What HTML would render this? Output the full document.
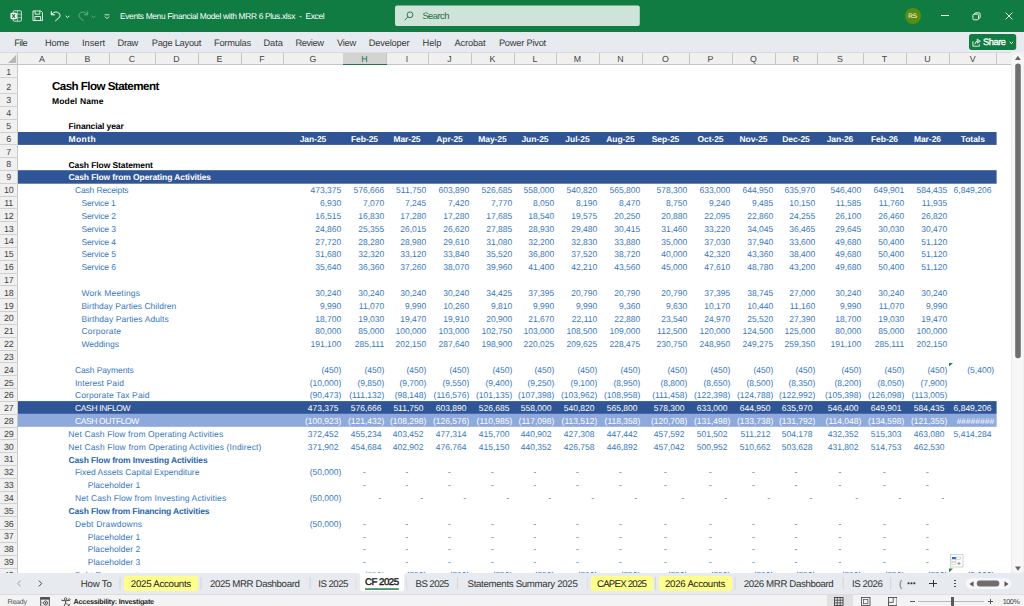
<!DOCTYPE html>
<html><head><meta charset="utf-8"><title>Excel</title>
<style>
html,body{margin:0;padding:0;}
body{width:1024px;height:606px;overflow:hidden;background:#fff;position:relative;font-family:"Liberation Sans",sans-serif;text-rendering:geometricPrecision;}
.r{position:absolute;display:block;}
.t{position:absolute;white-space:pre;margin:0;padding:0;}
</style></head><body>
<div class="r" style="left:0px;top:0px;width:1024px;height:32px;background:#107C41;"></div>
<svg class="r" style="left:10px;top:10px" width="12" height="12" viewBox="0 0 12 12"><rect x="3.2" y="0.8" width="8.2" height="10.4" rx="1" fill="none" stroke="#fff" stroke-width="0.9" opacity=".85"/><path d="M3.2 4.2H11.4M3.2 7.7H11.4M7.6 0.8V11.2" stroke="#fff" stroke-width="0.7" opacity=".7"/><rect x="0.5" y="2.7" width="6.3" height="6.6" rx="0.7" fill="#fff"/><path d="M2.2 4.2L5.1 7.8M5.1 4.2L2.2 7.8" stroke="#107C41" stroke-width="1.1"/></svg>
<svg class="r" style="left:31.5px;top:10.2px" width="11.5" height="11.5" viewBox="0 0 12 12"><path d="M1 1H9.3L11 2.7V11H1Z" fill="none" stroke="#fff" stroke-width="0.9"/><path d="M3.2 1V4.3H8.2V1M3 11V6.8H9V11" fill="none" stroke="#fff" stroke-width="0.9"/></svg>
<svg class="r" style="left:49.8px;top:9.6px" width="12" height="12" viewBox="0 0 12 12"><path d="M1.3 1.2V4.8H5M1.6 4.5C3.2 2.2 6.3 1.2 8.6 2.9C10.6 4.4 10.4 6.6 8.8 8L5.2 11" fill="none" stroke="#fff" stroke-width="1"/></svg>
<svg class="r" style="left:65px;top:14.5px" width="5" height="4" viewBox="0 0 5 4"><path d="M0.6 0.8L2.5 2.7L4.4 0.8" fill="none" stroke="#fff" stroke-width="0.9"/></svg>
<svg class="r" style="left:76.5px;top:10px;opacity:.38" width="12" height="12" viewBox="0 0 12 12"><path d="M10.7 1.2V4.8H7M10.4 4.5C8.8 2.2 5.7 1.2 3.4 2.9C1.4 4.4 1.6 6.6 3.2 8L6.8 11" fill="none" stroke="#fff" stroke-width="1"/></svg>
<svg class="r" style="left:90.5px;top:14.5px;opacity:.38" width="5" height="4" viewBox="0 0 5 4"><path d="M0.6 0.8L2.5 2.7L4.4 0.8" fill="none" stroke="#fff" stroke-width="0.9"/></svg>
<svg class="r" style="left:104px;top:13.5px" width="6" height="6" viewBox="0 0 6 6"><path d="M0.6 0.8H5.4" stroke="#fff" stroke-width="0.8"/><path d="M1 2.6L3 4.6L5 2.6" fill="none" stroke="#fff" stroke-width="0.9"/></svg>
<div class="t" style="left:120.00px;top:11px;font-size:8.4px;line-height:10px;height:10px;color:#fff;letter-spacing:-0.329px;">Events Menu Financial Model with MRR 6 Plus.xlsx  -  Excel</div>
<svg class="r" style="left:395px;top:5px" width="245" height="22"><rect x="0.00" y="0.50" width="244.80" height="20.60" fill="#CFE4D8" rx="2"/></svg>
<svg class="r" style="left:403.5px;top:11px" width="10" height="10" viewBox="0 0 10 10"><circle cx="6" cy="3.8" r="2.9" fill="none" stroke="#1e6b41" stroke-width="0.9"/><path d="M3.9 5.9L0.7 9.2" stroke="#1e6b41" stroke-width="0.9"/></svg>
<div class="t" style="left:422.40px;top:10px;font-size:9.4px;line-height:11px;height:11px;color:#1e6b41;letter-spacing:-0.531px;">Search</div>
<div class="r" style="left:904.6px;top:7.7px;width:16px;height:16px;background:#5B8C12;border-radius:50%;"></div>
<div class="t" style="left:908.29px;top:13px;font-size:6.5px;line-height:7px;height:7px;color:#fff;letter-spacing:-0.200px;">RS</div>
<div class="r" style="left:941px;top:15.2px;width:7.5px;height:0.9px;background:#fff;"></div>
<svg class="r" style="left:972px;top:12px" width="9" height="9" viewBox="0 0 9 9"><rect x="0.9" y="2.2" width="5.6" height="5.6" rx="1.2" fill="none" stroke="#fff" stroke-width="0.9"/><path d="M2.6 2.2V1.8Q2.6 0.8 3.6 0.8H7Q8.1 0.8 8.1 1.9V5.3Q8.1 6.3 7.1 6.3H6.6" fill="none" stroke="#fff" stroke-width="0.9"/></svg>
<svg class="r" style="left:1004.5px;top:12px" width="8" height="8" viewBox="0 0 8 8"><path d="M0.6 0.6L7.4 7.4M7.4 0.6L0.6 7.4" stroke="#fff" stroke-width="0.95"/></svg>
<div class="r" style="left:0px;top:32px;width:1024px;height:20px;background:#E7EAEE;"></div>
<div class="t" style="left:14.20px;top:38px;font-size:9.3px;line-height:10px;height:10px;color:#3b3b3b;letter-spacing:-0.471px;">File</div>
<div class="t" style="left:45.10px;top:38px;font-size:9.3px;line-height:10px;height:10px;color:#3b3b3b;letter-spacing:-0.252px;">Home</div>
<div class="t" style="left:82.00px;top:38px;font-size:9.3px;line-height:10px;height:10px;color:#3b3b3b;letter-spacing:-0.043px;">Insert</div>
<div class="t" style="left:117.60px;top:38px;font-size:9.3px;line-height:10px;height:10px;color:#3b3b3b;letter-spacing:-0.325px;">Draw</div>
<div class="t" style="left:151.80px;top:38px;font-size:9.3px;line-height:10px;height:10px;color:#3b3b3b;letter-spacing:-0.275px;">Page Layout</div>
<div class="t" style="left:214.00px;top:38px;font-size:9.3px;line-height:10px;height:10px;color:#3b3b3b;letter-spacing:-0.245px;">Formulas</div>
<div class="t" style="left:263.50px;top:38px;font-size:9.3px;line-height:10px;height:10px;color:#3b3b3b;letter-spacing:-0.111px;">Data</div>
<div class="t" style="left:295.40px;top:38px;font-size:9.3px;line-height:10px;height:10px;color:#3b3b3b;letter-spacing:-0.382px;">Review</div>
<div class="t" style="left:336.90px;top:38px;font-size:9.3px;line-height:10px;height:10px;color:#3b3b3b;letter-spacing:-0.222px;">View</div>
<div class="t" style="left:368.70px;top:38px;font-size:9.3px;line-height:10px;height:10px;color:#3b3b3b;letter-spacing:-0.177px;">Developer</div>
<div class="t" style="left:422.60px;top:38px;font-size:9.3px;line-height:10px;height:10px;color:#3b3b3b;letter-spacing:-0.107px;">Help</div>
<div class="t" style="left:454.40px;top:38px;font-size:9.3px;line-height:10px;height:10px;color:#3b3b3b;letter-spacing:-0.136px;">Acrobat</div>
<div class="t" style="left:498.90px;top:38px;font-size:9.3px;line-height:10px;height:10px;color:#3b3b3b;letter-spacing:-0.229px;">Power Pivot</div>
<svg class="r" style="left:969px;top:34px" width="48" height="16"><rect x="0.00" y="0.10" width="47.20" height="15.80" fill="#107C41" rx="2.6"/></svg>
<svg class="r" style="left:971.5px;top:37.5px" width="9.5" height="9" viewBox="0 0 9.5 9"><path d="M0.9 3.2V8.2H7.3V6.2" fill="none" stroke="#fff" stroke-width="0.85"/><path d="M2.9 6.4Q3 3.5 5.4 3.2" fill="none" stroke="#fff" stroke-width="0.85"/><path d="M5.2 1L8.5 3.2L5.2 5.3Z" fill="#fff" fill-opacity=".45" stroke="#fff" stroke-width="0.7"/></svg>
<div class="t" style="left:983.00px;top:37px;font-size:9.3px;line-height:10px;height:10px;color:#fff;letter-spacing:-0.463px;-webkit-text-stroke:0.3px #fff;">Share</div>
<svg class="r" style="left:1009.4px;top:40.6px" width="5" height="4" viewBox="0 0 5 4"><path d="M0.7 0.9L2.45 2.6L4.2 0.9" fill="none" stroke="#fff" stroke-width="1"/></svg>
<div class="r" style="left:0px;top:52px;width:1024px;height:12.2px;background:#F0F0F0;"></div>
<div class="r" style="left:0px;top:52px;width:1011px;height:0.6px;background:#DADADA;"></div>
<div class="r" style="left:0px;top:64px;width:1011px;height:0.8px;background:#C4C4C4;"></div>
<svg class="r" style="left:7px;top:54px" width="10" height="10" viewBox="0 0 10 10"><path d="M9.2 0.8V9H1Z" fill="#B7B7B7"/></svg>
<div class="r" style="left:17.3px;top:52px;width:0.8px;height:13px;background:#C9C9C9;"></div>
<div class="r" style="left:65.6px;top:53px;width:0.8px;height:11px;background:#C6C6C6;"></div>
<div class="t" style="left:39.07px;top:54px;font-size:8.8px;line-height:10px;height:10px;color:#444;letter-spacing:0.000px;">A</div>
<div class="r" style="left:108.6px;top:53px;width:0.8px;height:11px;background:#C6C6C6;"></div>
<div class="t" style="left:84.57px;top:54px;font-size:8.8px;line-height:10px;height:10px;color:#444;letter-spacing:0.000px;">B</div>
<div class="r" style="left:154.6px;top:53px;width:0.8px;height:11px;background:#C6C6C6;"></div>
<div class="t" style="left:128.82px;top:54px;font-size:8.8px;line-height:10px;height:10px;color:#444;letter-spacing:0.000px;">C</div>
<div class="r" style="left:197.6px;top:53px;width:0.8px;height:11px;background:#C6C6C6;"></div>
<div class="t" style="left:173.32px;top:54px;font-size:8.8px;line-height:10px;height:10px;color:#444;letter-spacing:0.000px;">D</div>
<div class="r" style="left:240.6px;top:53px;width:0.8px;height:11px;background:#C6C6C6;"></div>
<div class="t" style="left:216.57px;top:54px;font-size:8.8px;line-height:10px;height:10px;color:#444;letter-spacing:0.000px;">E</div>
<div class="r" style="left:282.6px;top:53px;width:0.8px;height:11px;background:#C6C6C6;"></div>
<div class="t" style="left:259.31px;top:54px;font-size:8.8px;line-height:10px;height:10px;color:#444;letter-spacing:0.000px;">F</div>
<div class="r" style="left:342.6px;top:53px;width:0.8px;height:11px;background:#C6C6C6;"></div>
<div class="t" style="left:309.58px;top:54px;font-size:8.8px;line-height:10px;height:10px;color:#444;letter-spacing:0.000px;">G</div>
<div class="r" style="left:343px;top:52.5px;width:43px;height:11.5px;background:#D3D3D3;"></div>
<div class="r" style="left:343px;top:63.7px;width:43.5px;height:1.3px;background:#217346;"></div>
<div class="r" style="left:385.6px;top:53px;width:0.8px;height:11px;background:#C6C6C6;"></div>
<div class="t" style="left:361.32px;top:54px;font-size:8.8px;line-height:10px;height:10px;color:#217346;letter-spacing:0.000px;">H</div>
<div class="r" style="left:427.6px;top:53px;width:0.8px;height:11px;background:#C6C6C6;"></div>
<div class="t" style="left:405.78px;top:54px;font-size:8.8px;line-height:10px;height:10px;color:#444;letter-spacing:0.000px;">I</div>
<div class="r" style="left:470.6px;top:53px;width:0.8px;height:11px;background:#C6C6C6;"></div>
<div class="t" style="left:447.30px;top:54px;font-size:8.8px;line-height:10px;height:10px;color:#444;letter-spacing:0.000px;">J</div>
<div class="r" style="left:513.6px;top:53px;width:0.8px;height:11px;background:#C6C6C6;"></div>
<div class="t" style="left:489.57px;top:54px;font-size:8.8px;line-height:10px;height:10px;color:#444;letter-spacing:0.000px;">K</div>
<div class="r" style="left:555.6px;top:53px;width:0.8px;height:11px;background:#C6C6C6;"></div>
<div class="t" style="left:532.55px;top:54px;font-size:8.8px;line-height:10px;height:10px;color:#444;letter-spacing:0.000px;">L</div>
<div class="r" style="left:598.6px;top:53px;width:0.8px;height:11px;background:#C6C6C6;"></div>
<div class="t" style="left:573.83px;top:54px;font-size:8.8px;line-height:10px;height:10px;color:#444;letter-spacing:0.000px;">M</div>
<div class="r" style="left:641.6px;top:53px;width:0.8px;height:11px;background:#C6C6C6;"></div>
<div class="t" style="left:617.32px;top:54px;font-size:8.8px;line-height:10px;height:10px;color:#444;letter-spacing:0.000px;">N</div>
<div class="r" style="left:688.6px;top:53px;width:0.8px;height:11px;background:#C6C6C6;"></div>
<div class="t" style="left:662.08px;top:54px;font-size:8.8px;line-height:10px;height:10px;color:#444;letter-spacing:0.000px;">O</div>
<div class="r" style="left:731.6px;top:53px;width:0.8px;height:11px;background:#C6C6C6;"></div>
<div class="t" style="left:707.57px;top:54px;font-size:8.8px;line-height:10px;height:10px;color:#444;letter-spacing:0.000px;">P</div>
<div class="r" style="left:774.6px;top:53px;width:0.8px;height:11px;background:#C6C6C6;"></div>
<div class="t" style="left:750.08px;top:54px;font-size:8.8px;line-height:10px;height:10px;color:#444;letter-spacing:0.000px;">Q</div>
<div class="r" style="left:816.6px;top:53px;width:0.8px;height:11px;background:#C6C6C6;"></div>
<div class="t" style="left:792.82px;top:54px;font-size:8.8px;line-height:10px;height:10px;color:#444;letter-spacing:0.000px;">R</div>
<div class="r" style="left:862.6px;top:53px;width:0.8px;height:11px;background:#C6C6C6;"></div>
<div class="t" style="left:837.07px;top:54px;font-size:8.8px;line-height:10px;height:10px;color:#444;letter-spacing:0.000px;">S</div>
<div class="r" style="left:905.6px;top:53px;width:0.8px;height:11px;background:#C6C6C6;"></div>
<div class="t" style="left:881.81px;top:54px;font-size:8.8px;line-height:10px;height:10px;color:#444;letter-spacing:0.000px;">T</div>
<div class="r" style="left:948.6px;top:53px;width:0.8px;height:11px;background:#C6C6C6;"></div>
<div class="t" style="left:924.32px;top:54px;font-size:8.8px;line-height:10px;height:10px;color:#444;letter-spacing:0.000px;">U</div>
<div class="r" style="left:996.2px;top:53px;width:0.8px;height:11px;background:#C6C6C6;"></div>
<div class="t" style="left:969.87px;top:54px;font-size:8.8px;line-height:10px;height:10px;color:#444;letter-spacing:0.000px;">V</div>
<div class="r" style="left:1010.6px;top:53px;width:0.8px;height:11px;background:#C6C6C6;"></div>
<div class="r" style="left:0px;top:64.8px;width:17.6px;height:508.5px;background:#F0F0F0;"></div>
<div class="r" style="left:17.2px;top:64.8px;width:0.8px;height:508.5px;background:#C9C9C9;"></div>
<div class="r" style="left:0px;top:76.89999999999999px;width:17.5px;height:0.8px;background:#D0D0D0;"></div>
<div class="t" style="left:6.33px;top:67px;font-size:8.9px;line-height:10px;height:10px;color:#444;letter-spacing:-0.250px;">1</div>
<div class="r" style="left:0px;top:93.05px;width:17.5px;height:0.8px;background:#D0D0D0;"></div>
<div class="t" style="left:6.33px;top:82px;font-size:8.9px;line-height:10px;height:10px;color:#444;letter-spacing:-0.250px;">2</div>
<div class="r" style="left:0px;top:105.875px;width:17.5px;height:0.8px;background:#D0D0D0;"></div>
<div class="t" style="left:6.33px;top:95px;font-size:8.9px;line-height:10px;height:10px;color:#444;letter-spacing:-0.250px;">3</div>
<div class="r" style="left:0px;top:118.69999999999999px;width:17.5px;height:0.8px;background:#D0D0D0;"></div>
<div class="t" style="left:6.33px;top:108px;font-size:8.9px;line-height:10px;height:10px;color:#444;letter-spacing:-0.250px;">4</div>
<div class="r" style="left:0px;top:131.525px;width:17.5px;height:0.8px;background:#D0D0D0;"></div>
<div class="t" style="left:6.33px;top:121px;font-size:8.9px;line-height:10px;height:10px;color:#444;letter-spacing:-0.250px;">5</div>
<div class="r" style="left:0px;top:144.35px;width:17.5px;height:0.8px;background:#D0D0D0;"></div>
<div class="t" style="left:6.33px;top:134px;font-size:8.9px;line-height:10px;height:10px;color:#444;letter-spacing:-0.250px;">6</div>
<div class="r" style="left:0px;top:157.17499999999998px;width:17.5px;height:0.8px;background:#D0D0D0;"></div>
<div class="t" style="left:6.33px;top:147px;font-size:8.9px;line-height:10px;height:10px;color:#444;letter-spacing:-0.250px;">7</div>
<div class="r" style="left:0px;top:169.99999999999997px;width:17.5px;height:0.8px;background:#D0D0D0;"></div>
<div class="t" style="left:6.33px;top:159px;font-size:8.9px;line-height:10px;height:10px;color:#444;letter-spacing:-0.250px;">8</div>
<div class="r" style="left:0px;top:182.825px;width:17.5px;height:0.8px;background:#D0D0D0;"></div>
<div class="t" style="left:6.33px;top:172px;font-size:8.9px;line-height:10px;height:10px;color:#444;letter-spacing:-0.250px;">9</div>
<div class="r" style="left:0px;top:195.65px;width:17.5px;height:0.8px;background:#D0D0D0;"></div>
<div class="t" style="left:3.98px;top:185px;font-size:8.9px;line-height:10px;height:10px;color:#444;letter-spacing:-0.250px;">10</div>
<div class="r" style="left:0px;top:208.475px;width:17.5px;height:0.8px;background:#D0D0D0;"></div>
<div class="t" style="left:4.31px;top:198px;font-size:8.9px;line-height:10px;height:10px;color:#444;letter-spacing:-0.250px;">11</div>
<div class="r" style="left:0px;top:221.29999999999998px;width:17.5px;height:0.8px;background:#D0D0D0;"></div>
<div class="t" style="left:3.98px;top:211px;font-size:8.9px;line-height:10px;height:10px;color:#444;letter-spacing:-0.250px;">12</div>
<div class="r" style="left:0px;top:234.12499999999997px;width:17.5px;height:0.8px;background:#D0D0D0;"></div>
<div class="t" style="left:3.98px;top:224px;font-size:8.9px;line-height:10px;height:10px;color:#444;letter-spacing:-0.250px;">13</div>
<div class="r" style="left:0px;top:246.94999999999996px;width:17.5px;height:0.8px;background:#D0D0D0;"></div>
<div class="t" style="left:3.98px;top:236px;font-size:8.9px;line-height:10px;height:10px;color:#444;letter-spacing:-0.250px;">14</div>
<div class="r" style="left:0px;top:259.77500000000003px;width:17.5px;height:0.8px;background:#D0D0D0;"></div>
<div class="t" style="left:3.98px;top:249px;font-size:8.9px;line-height:10px;height:10px;color:#444;letter-spacing:-0.250px;">15</div>
<div class="r" style="left:0px;top:272.6px;width:17.5px;height:0.8px;background:#D0D0D0;"></div>
<div class="t" style="left:3.98px;top:262px;font-size:8.9px;line-height:10px;height:10px;color:#444;letter-spacing:-0.250px;">16</div>
<div class="r" style="left:0px;top:285.425px;width:17.5px;height:0.8px;background:#D0D0D0;"></div>
<div class="t" style="left:3.98px;top:275px;font-size:8.9px;line-height:10px;height:10px;color:#444;letter-spacing:-0.250px;">17</div>
<div class="r" style="left:0px;top:298.25px;width:17.5px;height:0.8px;background:#D0D0D0;"></div>
<div class="t" style="left:3.98px;top:288px;font-size:8.9px;line-height:10px;height:10px;color:#444;letter-spacing:-0.250px;">18</div>
<div class="r" style="left:0px;top:311.075px;width:17.5px;height:0.8px;background:#D0D0D0;"></div>
<div class="t" style="left:3.98px;top:301px;font-size:8.9px;line-height:10px;height:10px;color:#444;letter-spacing:-0.250px;">19</div>
<div class="r" style="left:0px;top:323.90000000000003px;width:17.5px;height:0.8px;background:#D0D0D0;"></div>
<div class="t" style="left:3.98px;top:313px;font-size:8.9px;line-height:10px;height:10px;color:#444;letter-spacing:-0.250px;">20</div>
<div class="r" style="left:0px;top:336.725px;width:17.5px;height:0.8px;background:#D0D0D0;"></div>
<div class="t" style="left:3.98px;top:326px;font-size:8.9px;line-height:10px;height:10px;color:#444;letter-spacing:-0.250px;">21</div>
<div class="r" style="left:0px;top:349.55px;width:17.5px;height:0.8px;background:#D0D0D0;"></div>
<div class="t" style="left:3.98px;top:339px;font-size:8.9px;line-height:10px;height:10px;color:#444;letter-spacing:-0.250px;">22</div>
<div class="r" style="left:0px;top:362.375px;width:17.5px;height:0.8px;background:#D0D0D0;"></div>
<div class="t" style="left:3.98px;top:352px;font-size:8.9px;line-height:10px;height:10px;color:#444;letter-spacing:-0.250px;">23</div>
<div class="r" style="left:0px;top:375.2px;width:17.5px;height:0.8px;background:#D0D0D0;"></div>
<div class="t" style="left:3.98px;top:365px;font-size:8.9px;line-height:10px;height:10px;color:#444;letter-spacing:-0.250px;">24</div>
<div class="r" style="left:0px;top:388.025px;width:17.5px;height:0.8px;background:#D0D0D0;"></div>
<div class="t" style="left:3.98px;top:378px;font-size:8.9px;line-height:10px;height:10px;color:#444;letter-spacing:-0.250px;">25</div>
<div class="r" style="left:0px;top:400.84999999999997px;width:17.5px;height:0.8px;background:#D0D0D0;"></div>
<div class="t" style="left:3.98px;top:390px;font-size:8.9px;line-height:10px;height:10px;color:#444;letter-spacing:-0.250px;">26</div>
<div class="r" style="left:0px;top:413.675px;width:17.5px;height:0.8px;background:#D0D0D0;"></div>
<div class="t" style="left:3.98px;top:403px;font-size:8.9px;line-height:10px;height:10px;color:#444;letter-spacing:-0.250px;">27</div>
<div class="r" style="left:0px;top:426.5px;width:17.5px;height:0.8px;background:#D0D0D0;"></div>
<div class="t" style="left:3.98px;top:416px;font-size:8.9px;line-height:10px;height:10px;color:#444;letter-spacing:-0.250px;">28</div>
<div class="r" style="left:0px;top:439.325px;width:17.5px;height:0.8px;background:#D0D0D0;"></div>
<div class="t" style="left:3.98px;top:429px;font-size:8.9px;line-height:10px;height:10px;color:#444;letter-spacing:-0.250px;">29</div>
<div class="r" style="left:0px;top:452.15px;width:17.5px;height:0.8px;background:#D0D0D0;"></div>
<div class="t" style="left:3.98px;top:442px;font-size:8.9px;line-height:10px;height:10px;color:#444;letter-spacing:-0.250px;">30</div>
<div class="r" style="left:0px;top:464.97499999999997px;width:17.5px;height:0.8px;background:#D0D0D0;"></div>
<div class="t" style="left:3.98px;top:454px;font-size:8.9px;line-height:10px;height:10px;color:#444;letter-spacing:-0.250px;">31</div>
<div class="r" style="left:0px;top:477.8px;width:17.5px;height:0.8px;background:#D0D0D0;"></div>
<div class="t" style="left:3.98px;top:467px;font-size:8.9px;line-height:10px;height:10px;color:#444;letter-spacing:-0.250px;">32</div>
<div class="r" style="left:0px;top:490.625px;width:17.5px;height:0.8px;background:#D0D0D0;"></div>
<div class="t" style="left:3.98px;top:480px;font-size:8.9px;line-height:10px;height:10px;color:#444;letter-spacing:-0.250px;">33</div>
<div class="r" style="left:0px;top:503.45px;width:17.5px;height:0.8px;background:#D0D0D0;"></div>
<div class="t" style="left:3.98px;top:493px;font-size:8.9px;line-height:10px;height:10px;color:#444;letter-spacing:-0.250px;">34</div>
<div class="r" style="left:0px;top:516.275px;width:17.5px;height:0.8px;background:#D0D0D0;"></div>
<div class="t" style="left:3.98px;top:506px;font-size:8.9px;line-height:10px;height:10px;color:#444;letter-spacing:-0.250px;">35</div>
<div class="r" style="left:0px;top:529.1px;width:17.5px;height:0.8px;background:#D0D0D0;"></div>
<div class="t" style="left:3.98px;top:519px;font-size:8.9px;line-height:10px;height:10px;color:#444;letter-spacing:-0.250px;">36</div>
<div class="r" style="left:0px;top:541.9250000000001px;width:17.5px;height:0.8px;background:#D0D0D0;"></div>
<div class="t" style="left:3.98px;top:531px;font-size:8.9px;line-height:10px;height:10px;color:#444;letter-spacing:-0.250px;">37</div>
<div class="r" style="left:0px;top:554.75px;width:17.5px;height:0.8px;background:#D0D0D0;"></div>
<div class="t" style="left:3.98px;top:544px;font-size:8.9px;line-height:10px;height:10px;color:#444;letter-spacing:-0.250px;">38</div>
<div class="r" style="left:0px;top:567.575px;width:17.5px;height:0.8px;background:#D0D0D0;"></div>
<div class="t" style="left:3.98px;top:557px;font-size:8.9px;line-height:10px;height:10px;color:#444;letter-spacing:-0.250px;">39</div>
<div class="r" style="left:0px;top:580.4px;width:17.5px;height:0.8px;background:#D0D0D0;"></div>
<div class="t" style="left:3.98px;top:570px;font-size:8.9px;line-height:10px;height:10px;color:#444;letter-spacing:-0.250px;">40</div>
<svg class="r" style="left:18px;top:132px" width="979" height="13"><rect x="0.00" y="0.00" width="978.60" height="12.90" fill="#2F5597"/></svg>
<svg class="r" style="left:18px;top:170px" width="979" height="14"><rect x="0.00" y="0.20" width="978.60" height="13.50" fill="#2F5597"/></svg>
<svg class="r" style="left:18px;top:413px" width="979" height="14"><rect x="0.00" y="0.80" width="978.60" height="13.00" fill="#8EA9DB"/></svg>
<svg class="r" style="left:18px;top:401px" width="979" height="13"><rect x="0.00" y="0.10" width="978.60" height="12.75" fill="#2F5597"/></svg>
<div class="t" style="left:52.00px;top:81px;font-size:11.6px;line-height:12px;height:12px;color:#000;letter-spacing:-0.553px;font-weight:bold;">Cash Flow Statement</div>
<div class="t" style="left:52.00px;top:96px;font-size:8.5px;line-height:10px;height:10px;color:#000;letter-spacing:0.163px;font-weight:bold;">Model Name</div>
<div class="t" style="left:68.50px;top:121px;font-size:8.5px;line-height:10px;height:10px;color:#000;letter-spacing:-0.114px;font-weight:bold;">Financial year</div>
<div class="t" style="left:68.50px;top:134px;font-size:8.5px;line-height:10px;height:10px;color:#fff;letter-spacing:0.402px;font-weight:bold;">Month</div>
<div class="t" style="left:68.50px;top:160px;font-size:8.5px;line-height:10px;height:10px;color:#000;letter-spacing:-0.087px;font-weight:bold;">Cash Flow Statement</div>
<div class="t" style="left:68.50px;top:172px;font-size:8.5px;line-height:10px;height:10px;color:#fff;letter-spacing:-0.103px;font-weight:bold;">Cash Flow from Operating Activities</div>
<div class="t" style="left:74.90px;top:185px;font-size:8.5px;line-height:10px;height:10px;color:#3778BD;letter-spacing:-0.129px;">Cash Receipts</div>
<div class="t" style="left:81.40px;top:198px;font-size:8.5px;line-height:10px;height:10px;color:#3778BD;letter-spacing:-0.137px;">Service 1</div>
<div class="t" style="left:81.40px;top:211px;font-size:8.5px;line-height:10px;height:10px;color:#3778BD;letter-spacing:-0.115px;">Service 2</div>
<div class="t" style="left:81.40px;top:224px;font-size:8.5px;line-height:10px;height:10px;color:#3778BD;letter-spacing:-0.115px;">Service 3</div>
<div class="t" style="left:81.40px;top:237px;font-size:8.5px;line-height:10px;height:10px;color:#3778BD;letter-spacing:-0.115px;">Service 4</div>
<div class="t" style="left:81.40px;top:249px;font-size:8.5px;line-height:10px;height:10px;color:#3778BD;letter-spacing:-0.115px;">Service 5</div>
<div class="t" style="left:81.40px;top:262px;font-size:8.5px;line-height:10px;height:10px;color:#3778BD;letter-spacing:-0.115px;">Service 6</div>
<div class="t" style="left:81.40px;top:288px;font-size:8.5px;line-height:10px;height:10px;color:#3778BD;letter-spacing:0.175px;">Work Meetings</div>
<div class="t" style="left:81.40px;top:301px;font-size:8.5px;line-height:10px;height:10px;color:#3778BD;letter-spacing:0.039px;">Birthday Parties Children</div>
<div class="t" style="left:81.40px;top:314px;font-size:8.5px;line-height:10px;height:10px;color:#3778BD;letter-spacing:0.082px;">Birthday Parties Adults</div>
<div class="t" style="left:81.40px;top:326px;font-size:8.5px;line-height:10px;height:10px;color:#3778BD;letter-spacing:0.234px;">Corporate</div>
<div class="t" style="left:81.40px;top:339px;font-size:8.5px;line-height:10px;height:10px;color:#3778BD;letter-spacing:-0.018px;">Weddings</div>
<div class="t" style="left:74.90px;top:365px;font-size:8.5px;line-height:10px;height:10px;color:#3778BD;letter-spacing:-0.092px;">Cash Payments</div>
<div class="t" style="left:74.90px;top:378px;font-size:8.5px;line-height:10px;height:10px;color:#3778BD;letter-spacing:0.106px;">Interest Paid</div>
<div class="t" style="left:74.90px;top:390px;font-size:8.5px;line-height:10px;height:10px;color:#3778BD;letter-spacing:0.116px;">Corporate Tax Paid</div>
<div class="t" style="left:74.90px;top:403px;font-size:8.5px;line-height:10px;height:10px;color:#fff;letter-spacing:-0.330px;">CASH INFLOW</div>
<div class="t" style="left:74.90px;top:416px;font-size:8.5px;line-height:10px;height:10px;color:#fff;letter-spacing:-0.364px;">CASH OUTFLOW</div>
<div class="t" style="left:68.30px;top:429px;font-size:8.5px;line-height:10px;height:10px;color:#3778BD;letter-spacing:0.123px;">Net Cash Flow from Operating Activities</div>
<div class="t" style="left:68.30px;top:442px;font-size:8.5px;line-height:10px;height:10px;color:#3778BD;letter-spacing:0.142px;">Net Cash Flow from Operating Activities (Indirect)</div>
<div class="t" style="left:74.90px;top:467px;font-size:8.5px;line-height:10px;height:10px;color:#3778BD;letter-spacing:-0.007px;">Fixed Assets Capital Expenditure</div>
<div class="t" style="left:87.70px;top:480px;font-size:8.5px;line-height:10px;height:10px;color:#3778BD;letter-spacing:0.040px;">Placeholder 1</div>
<div class="t" style="left:74.90px;top:493px;font-size:8.5px;line-height:10px;height:10px;color:#3778BD;letter-spacing:0.115px;">Net Cash Flow from Investing Activities</div>
<div class="t" style="left:74.90px;top:519px;font-size:8.5px;line-height:10px;height:10px;color:#3778BD;letter-spacing:0.191px;">Debt Drawdowns</div>
<div class="t" style="left:87.70px;top:532px;font-size:8.5px;line-height:10px;height:10px;color:#3778BD;letter-spacing:0.040px;">Placeholder 1</div>
<div class="t" style="left:87.70px;top:544px;font-size:8.5px;line-height:10px;height:10px;color:#3778BD;letter-spacing:0.055px;">Placeholder 2</div>
<div class="t" style="left:87.70px;top:557px;font-size:8.5px;line-height:10px;height:10px;color:#3778BD;letter-spacing:0.055px;">Placeholder 3</div>
<div class="t" style="left:74.90px;top:570px;font-size:8.5px;line-height:10px;height:10px;color:#3778BD;letter-spacing:0.001px;">Debt Repayments</div>
<div class="t" style="left:68.50px;top:455px;font-size:8.5px;line-height:10px;height:10px;color:#1F66AE;letter-spacing:-0.122px;font-weight:bold;">Cash Flow from Investing Activities</div>
<div class="t" style="left:68.50px;top:506px;font-size:8.5px;line-height:10px;height:10px;color:#1F66AE;letter-spacing:-0.151px;font-weight:bold;">Cash Flow from Financing Activities</div>
<div class="t" style="left:299.66px;top:134px;font-size:8.5px;line-height:10px;height:10px;color:#fff;letter-spacing:-0.050px;font-weight:bold;">Jan-25</div>
<div class="t" style="left:350.93px;top:134px;font-size:8.5px;line-height:10px;height:10px;color:#fff;letter-spacing:-0.050px;font-weight:bold;">Feb-25</div>
<div class="t" style="left:393.42px;top:134px;font-size:8.5px;line-height:10px;height:10px;color:#fff;letter-spacing:-0.050px;font-weight:bold;">Mar-25</div>
<div class="t" style="left:436.16px;top:134px;font-size:8.5px;line-height:10px;height:10px;color:#fff;letter-spacing:-0.050px;font-weight:bold;">Apr-25</div>
<div class="t" style="left:478.21px;top:134px;font-size:8.5px;line-height:10px;height:10px;color:#fff;letter-spacing:-0.050px;font-weight:bold;">May-25</div>
<div class="t" style="left:521.43px;top:134px;font-size:8.5px;line-height:10px;height:10px;color:#fff;letter-spacing:-0.050px;font-weight:bold;">Jun-25</div>
<div class="t" style="left:565.34px;top:134px;font-size:8.5px;line-height:10px;height:10px;color:#fff;letter-spacing:-0.050px;font-weight:bold;">Jul-25</div>
<div class="t" style="left:606.22px;top:134px;font-size:8.5px;line-height:10px;height:10px;color:#fff;letter-spacing:-0.050px;font-weight:bold;">Aug-25</div>
<div class="t" style="left:651.69px;top:134px;font-size:8.5px;line-height:10px;height:10px;color:#fff;letter-spacing:-0.050px;font-weight:bold;">Sep-25</div>
<div class="t" style="left:697.40px;top:134px;font-size:8.5px;line-height:10px;height:10px;color:#fff;letter-spacing:-0.050px;font-weight:bold;">Oct-25</div>
<div class="t" style="left:739.45px;top:134px;font-size:8.5px;line-height:10px;height:10px;color:#fff;letter-spacing:-0.050px;font-weight:bold;">Nov-25</div>
<div class="t" style="left:782.19px;top:134px;font-size:8.5px;line-height:10px;height:10px;color:#fff;letter-spacing:-0.050px;font-weight:bold;">Dec-25</div>
<div class="t" style="left:826.66px;top:134px;font-size:8.5px;line-height:10px;height:10px;color:#fff;letter-spacing:-0.050px;font-weight:bold;">Jan-26</div>
<div class="t" style="left:870.93px;top:134px;font-size:8.5px;line-height:10px;height:10px;color:#fff;letter-spacing:-0.050px;font-weight:bold;">Feb-26</div>
<div class="t" style="left:913.92px;top:134px;font-size:8.5px;line-height:10px;height:10px;color:#fff;letter-spacing:-0.050px;font-weight:bold;">Mar-26</div>
<div class="t" style="left:960.72px;top:134px;font-size:8.5px;line-height:10px;height:10px;color:#fff;letter-spacing:-0.050px;font-weight:bold;">Totals</div>
<div class="t" style="right:682.80px;top:185px;font-size:8.5px;line-height:10px;height:10px;color:#3778BD;letter-spacing:-0.000px;">473,375</div>
<div class="t" style="right:639.80px;top:185px;font-size:8.5px;line-height:10px;height:10px;color:#3778BD;letter-spacing:-0.000px;">576,666</div>
<div class="t" style="right:597.80px;top:185px;font-size:8.5px;line-height:10px;height:10px;color:#3778BD;letter-spacing:-0.000px;">511,750</div>
<div class="t" style="right:554.80px;top:185px;font-size:8.5px;line-height:10px;height:10px;color:#3778BD;letter-spacing:-0.000px;">603,890</div>
<div class="t" style="right:511.80px;top:185px;font-size:8.5px;line-height:10px;height:10px;color:#3778BD;letter-spacing:-0.000px;">526,685</div>
<div class="t" style="right:469.80px;top:185px;font-size:8.5px;line-height:10px;height:10px;color:#3778BD;letter-spacing:-0.000px;">558,000</div>
<div class="t" style="right:426.80px;top:185px;font-size:8.5px;line-height:10px;height:10px;color:#3778BD;letter-spacing:-0.000px;">540,820</div>
<div class="t" style="right:383.80px;top:185px;font-size:8.5px;line-height:10px;height:10px;color:#3778BD;letter-spacing:-0.000px;">565,800</div>
<div class="t" style="right:336.80px;top:185px;font-size:8.5px;line-height:10px;height:10px;color:#3778BD;letter-spacing:-0.000px;">578,300</div>
<div class="t" style="right:293.80px;top:185px;font-size:8.5px;line-height:10px;height:10px;color:#3778BD;letter-spacing:-0.000px;">633,000</div>
<div class="t" style="right:250.80px;top:185px;font-size:8.5px;line-height:10px;height:10px;color:#3778BD;letter-spacing:-0.000px;">644,950</div>
<div class="t" style="right:208.80px;top:185px;font-size:8.5px;line-height:10px;height:10px;color:#3778BD;letter-spacing:-0.000px;">635,970</div>
<div class="t" style="right:162.80px;top:185px;font-size:8.5px;line-height:10px;height:10px;color:#3778BD;letter-spacing:-0.000px;">546,400</div>
<div class="t" style="right:119.80px;top:185px;font-size:8.5px;line-height:10px;height:10px;color:#3778BD;letter-spacing:-0.000px;">649,901</div>
<div class="t" style="right:76.80px;top:185px;font-size:8.5px;line-height:10px;height:10px;color:#3778BD;letter-spacing:-0.000px;">584,435</div>
<div class="t" style="right:32.60px;top:185px;font-size:8.5px;line-height:10px;height:10px;color:#3778BD;letter-spacing:-0.000px;">6,849,206</div>
<div class="t" style="right:682.80px;top:198px;font-size:8.5px;line-height:10px;height:10px;color:#3778BD;letter-spacing:-0.000px;">6,930</div>
<div class="t" style="right:639.80px;top:198px;font-size:8.5px;line-height:10px;height:10px;color:#3778BD;letter-spacing:-0.000px;">7,070</div>
<div class="t" style="right:597.80px;top:198px;font-size:8.5px;line-height:10px;height:10px;color:#3778BD;letter-spacing:-0.000px;">7,245</div>
<div class="t" style="right:554.80px;top:198px;font-size:8.5px;line-height:10px;height:10px;color:#3778BD;letter-spacing:-0.000px;">7,420</div>
<div class="t" style="right:511.80px;top:198px;font-size:8.5px;line-height:10px;height:10px;color:#3778BD;letter-spacing:-0.000px;">7,770</div>
<div class="t" style="right:469.80px;top:198px;font-size:8.5px;line-height:10px;height:10px;color:#3778BD;letter-spacing:-0.000px;">8,050</div>
<div class="t" style="right:426.80px;top:198px;font-size:8.5px;line-height:10px;height:10px;color:#3778BD;letter-spacing:-0.000px;">8,190</div>
<div class="t" style="right:383.80px;top:198px;font-size:8.5px;line-height:10px;height:10px;color:#3778BD;letter-spacing:-0.000px;">8,470</div>
<div class="t" style="right:336.80px;top:198px;font-size:8.5px;line-height:10px;height:10px;color:#3778BD;letter-spacing:-0.000px;">8,750</div>
<div class="t" style="right:293.80px;top:198px;font-size:8.5px;line-height:10px;height:10px;color:#3778BD;letter-spacing:-0.000px;">9,240</div>
<div class="t" style="right:250.80px;top:198px;font-size:8.5px;line-height:10px;height:10px;color:#3778BD;letter-spacing:-0.000px;">9,485</div>
<div class="t" style="right:208.80px;top:198px;font-size:8.5px;line-height:10px;height:10px;color:#3778BD;letter-spacing:-0.000px;">10,150</div>
<div class="t" style="right:162.80px;top:198px;font-size:8.5px;line-height:10px;height:10px;color:#3778BD;letter-spacing:-0.000px;">11,585</div>
<div class="t" style="right:119.80px;top:198px;font-size:8.5px;line-height:10px;height:10px;color:#3778BD;letter-spacing:-0.000px;">11,760</div>
<div class="t" style="right:76.80px;top:198px;font-size:8.5px;line-height:10px;height:10px;color:#3778BD;letter-spacing:-0.000px;">11,935</div>
<div class="t" style="right:682.80px;top:211px;font-size:8.5px;line-height:10px;height:10px;color:#3778BD;letter-spacing:-0.000px;">16,515</div>
<div class="t" style="right:639.80px;top:211px;font-size:8.5px;line-height:10px;height:10px;color:#3778BD;letter-spacing:-0.000px;">16,830</div>
<div class="t" style="right:597.80px;top:211px;font-size:8.5px;line-height:10px;height:10px;color:#3778BD;letter-spacing:-0.000px;">17,280</div>
<div class="t" style="right:554.80px;top:211px;font-size:8.5px;line-height:10px;height:10px;color:#3778BD;letter-spacing:-0.000px;">17,280</div>
<div class="t" style="right:511.80px;top:211px;font-size:8.5px;line-height:10px;height:10px;color:#3778BD;letter-spacing:-0.000px;">17,685</div>
<div class="t" style="right:469.80px;top:211px;font-size:8.5px;line-height:10px;height:10px;color:#3778BD;letter-spacing:-0.000px;">18,540</div>
<div class="t" style="right:426.80px;top:211px;font-size:8.5px;line-height:10px;height:10px;color:#3778BD;letter-spacing:-0.000px;">19,575</div>
<div class="t" style="right:383.80px;top:211px;font-size:8.5px;line-height:10px;height:10px;color:#3778BD;letter-spacing:-0.000px;">20,250</div>
<div class="t" style="right:336.80px;top:211px;font-size:8.5px;line-height:10px;height:10px;color:#3778BD;letter-spacing:-0.000px;">20,880</div>
<div class="t" style="right:293.80px;top:211px;font-size:8.5px;line-height:10px;height:10px;color:#3778BD;letter-spacing:-0.000px;">22,095</div>
<div class="t" style="right:250.80px;top:211px;font-size:8.5px;line-height:10px;height:10px;color:#3778BD;letter-spacing:-0.000px;">22,860</div>
<div class="t" style="right:208.80px;top:211px;font-size:8.5px;line-height:10px;height:10px;color:#3778BD;letter-spacing:-0.000px;">24,255</div>
<div class="t" style="right:162.80px;top:211px;font-size:8.5px;line-height:10px;height:10px;color:#3778BD;letter-spacing:-0.000px;">26,100</div>
<div class="t" style="right:119.80px;top:211px;font-size:8.5px;line-height:10px;height:10px;color:#3778BD;letter-spacing:-0.000px;">26,460</div>
<div class="t" style="right:76.80px;top:211px;font-size:8.5px;line-height:10px;height:10px;color:#3778BD;letter-spacing:-0.000px;">26,820</div>
<div class="t" style="right:682.80px;top:224px;font-size:8.5px;line-height:10px;height:10px;color:#3778BD;letter-spacing:-0.000px;">24,860</div>
<div class="t" style="right:639.80px;top:224px;font-size:8.5px;line-height:10px;height:10px;color:#3778BD;letter-spacing:-0.000px;">25,355</div>
<div class="t" style="right:597.80px;top:224px;font-size:8.5px;line-height:10px;height:10px;color:#3778BD;letter-spacing:-0.000px;">26,015</div>
<div class="t" style="right:554.80px;top:224px;font-size:8.5px;line-height:10px;height:10px;color:#3778BD;letter-spacing:-0.000px;">26,620</div>
<div class="t" style="right:511.80px;top:224px;font-size:8.5px;line-height:10px;height:10px;color:#3778BD;letter-spacing:-0.000px;">27,885</div>
<div class="t" style="right:469.80px;top:224px;font-size:8.5px;line-height:10px;height:10px;color:#3778BD;letter-spacing:-0.000px;">28,930</div>
<div class="t" style="right:426.80px;top:224px;font-size:8.5px;line-height:10px;height:10px;color:#3778BD;letter-spacing:-0.000px;">29,480</div>
<div class="t" style="right:383.80px;top:224px;font-size:8.5px;line-height:10px;height:10px;color:#3778BD;letter-spacing:-0.000px;">30,415</div>
<div class="t" style="right:336.80px;top:224px;font-size:8.5px;line-height:10px;height:10px;color:#3778BD;letter-spacing:-0.000px;">31,460</div>
<div class="t" style="right:293.80px;top:224px;font-size:8.5px;line-height:10px;height:10px;color:#3778BD;letter-spacing:-0.000px;">33,220</div>
<div class="t" style="right:250.80px;top:224px;font-size:8.5px;line-height:10px;height:10px;color:#3778BD;letter-spacing:-0.000px;">34,045</div>
<div class="t" style="right:208.80px;top:224px;font-size:8.5px;line-height:10px;height:10px;color:#3778BD;letter-spacing:-0.000px;">36,465</div>
<div class="t" style="right:162.80px;top:224px;font-size:8.5px;line-height:10px;height:10px;color:#3778BD;letter-spacing:-0.000px;">29,645</div>
<div class="t" style="right:119.80px;top:224px;font-size:8.5px;line-height:10px;height:10px;color:#3778BD;letter-spacing:-0.000px;">30,030</div>
<div class="t" style="right:76.80px;top:224px;font-size:8.5px;line-height:10px;height:10px;color:#3778BD;letter-spacing:-0.000px;">30,470</div>
<div class="t" style="right:682.80px;top:237px;font-size:8.5px;line-height:10px;height:10px;color:#3778BD;letter-spacing:-0.000px;">27,720</div>
<div class="t" style="right:639.80px;top:237px;font-size:8.5px;line-height:10px;height:10px;color:#3778BD;letter-spacing:-0.000px;">28,280</div>
<div class="t" style="right:597.80px;top:237px;font-size:8.5px;line-height:10px;height:10px;color:#3778BD;letter-spacing:-0.000px;">28,980</div>
<div class="t" style="right:554.80px;top:237px;font-size:8.5px;line-height:10px;height:10px;color:#3778BD;letter-spacing:-0.000px;">29,610</div>
<div class="t" style="right:511.80px;top:237px;font-size:8.5px;line-height:10px;height:10px;color:#3778BD;letter-spacing:-0.000px;">31,080</div>
<div class="t" style="right:469.80px;top:237px;font-size:8.5px;line-height:10px;height:10px;color:#3778BD;letter-spacing:-0.000px;">32,200</div>
<div class="t" style="right:426.80px;top:237px;font-size:8.5px;line-height:10px;height:10px;color:#3778BD;letter-spacing:-0.000px;">32,830</div>
<div class="t" style="right:383.80px;top:237px;font-size:8.5px;line-height:10px;height:10px;color:#3778BD;letter-spacing:-0.000px;">33,880</div>
<div class="t" style="right:336.80px;top:237px;font-size:8.5px;line-height:10px;height:10px;color:#3778BD;letter-spacing:-0.000px;">35,000</div>
<div class="t" style="right:293.80px;top:237px;font-size:8.5px;line-height:10px;height:10px;color:#3778BD;letter-spacing:-0.000px;">37,030</div>
<div class="t" style="right:250.80px;top:237px;font-size:8.5px;line-height:10px;height:10px;color:#3778BD;letter-spacing:-0.000px;">37,940</div>
<div class="t" style="right:208.80px;top:237px;font-size:8.5px;line-height:10px;height:10px;color:#3778BD;letter-spacing:-0.000px;">33,600</div>
<div class="t" style="right:162.80px;top:237px;font-size:8.5px;line-height:10px;height:10px;color:#3778BD;letter-spacing:-0.000px;">49,680</div>
<div class="t" style="right:119.80px;top:237px;font-size:8.5px;line-height:10px;height:10px;color:#3778BD;letter-spacing:-0.000px;">50,400</div>
<div class="t" style="right:76.80px;top:237px;font-size:8.5px;line-height:10px;height:10px;color:#3778BD;letter-spacing:-0.000px;">51,120</div>
<div class="t" style="right:682.80px;top:249px;font-size:8.5px;line-height:10px;height:10px;color:#3778BD;letter-spacing:-0.000px;">31,680</div>
<div class="t" style="right:639.80px;top:249px;font-size:8.5px;line-height:10px;height:10px;color:#3778BD;letter-spacing:-0.000px;">32,320</div>
<div class="t" style="right:597.80px;top:249px;font-size:8.5px;line-height:10px;height:10px;color:#3778BD;letter-spacing:-0.000px;">33,120</div>
<div class="t" style="right:554.80px;top:249px;font-size:8.5px;line-height:10px;height:10px;color:#3778BD;letter-spacing:-0.000px;">33,840</div>
<div class="t" style="right:511.80px;top:249px;font-size:8.5px;line-height:10px;height:10px;color:#3778BD;letter-spacing:-0.000px;">35,520</div>
<div class="t" style="right:469.80px;top:249px;font-size:8.5px;line-height:10px;height:10px;color:#3778BD;letter-spacing:-0.000px;">36,800</div>
<div class="t" style="right:426.80px;top:249px;font-size:8.5px;line-height:10px;height:10px;color:#3778BD;letter-spacing:-0.000px;">37,520</div>
<div class="t" style="right:383.80px;top:249px;font-size:8.5px;line-height:10px;height:10px;color:#3778BD;letter-spacing:-0.000px;">38,720</div>
<div class="t" style="right:336.80px;top:249px;font-size:8.5px;line-height:10px;height:10px;color:#3778BD;letter-spacing:-0.000px;">40,000</div>
<div class="t" style="right:293.80px;top:249px;font-size:8.5px;line-height:10px;height:10px;color:#3778BD;letter-spacing:-0.000px;">42,320</div>
<div class="t" style="right:250.80px;top:249px;font-size:8.5px;line-height:10px;height:10px;color:#3778BD;letter-spacing:-0.000px;">43,360</div>
<div class="t" style="right:208.80px;top:249px;font-size:8.5px;line-height:10px;height:10px;color:#3778BD;letter-spacing:-0.000px;">38,400</div>
<div class="t" style="right:162.80px;top:249px;font-size:8.5px;line-height:10px;height:10px;color:#3778BD;letter-spacing:-0.000px;">49,680</div>
<div class="t" style="right:119.80px;top:249px;font-size:8.5px;line-height:10px;height:10px;color:#3778BD;letter-spacing:-0.000px;">50,400</div>
<div class="t" style="right:76.80px;top:249px;font-size:8.5px;line-height:10px;height:10px;color:#3778BD;letter-spacing:-0.000px;">51,120</div>
<div class="t" style="right:682.80px;top:262px;font-size:8.5px;line-height:10px;height:10px;color:#3778BD;letter-spacing:-0.000px;">35,640</div>
<div class="t" style="right:639.80px;top:262px;font-size:8.5px;line-height:10px;height:10px;color:#3778BD;letter-spacing:-0.000px;">36,360</div>
<div class="t" style="right:597.80px;top:262px;font-size:8.5px;line-height:10px;height:10px;color:#3778BD;letter-spacing:-0.000px;">37,260</div>
<div class="t" style="right:554.80px;top:262px;font-size:8.5px;line-height:10px;height:10px;color:#3778BD;letter-spacing:-0.000px;">38,070</div>
<div class="t" style="right:511.80px;top:262px;font-size:8.5px;line-height:10px;height:10px;color:#3778BD;letter-spacing:-0.000px;">39,960</div>
<div class="t" style="right:469.80px;top:262px;font-size:8.5px;line-height:10px;height:10px;color:#3778BD;letter-spacing:-0.000px;">41,400</div>
<div class="t" style="right:426.80px;top:262px;font-size:8.5px;line-height:10px;height:10px;color:#3778BD;letter-spacing:-0.000px;">42,210</div>
<div class="t" style="right:383.80px;top:262px;font-size:8.5px;line-height:10px;height:10px;color:#3778BD;letter-spacing:-0.000px;">43,560</div>
<div class="t" style="right:336.80px;top:262px;font-size:8.5px;line-height:10px;height:10px;color:#3778BD;letter-spacing:-0.000px;">45,000</div>
<div class="t" style="right:293.80px;top:262px;font-size:8.5px;line-height:10px;height:10px;color:#3778BD;letter-spacing:-0.000px;">47,610</div>
<div class="t" style="right:250.80px;top:262px;font-size:8.5px;line-height:10px;height:10px;color:#3778BD;letter-spacing:-0.000px;">48,780</div>
<div class="t" style="right:208.80px;top:262px;font-size:8.5px;line-height:10px;height:10px;color:#3778BD;letter-spacing:-0.000px;">43,200</div>
<div class="t" style="right:162.80px;top:262px;font-size:8.5px;line-height:10px;height:10px;color:#3778BD;letter-spacing:-0.000px;">49,680</div>
<div class="t" style="right:119.80px;top:262px;font-size:8.5px;line-height:10px;height:10px;color:#3778BD;letter-spacing:-0.000px;">50,400</div>
<div class="t" style="right:76.80px;top:262px;font-size:8.5px;line-height:10px;height:10px;color:#3778BD;letter-spacing:-0.000px;">51,120</div>
<div class="t" style="right:682.80px;top:288px;font-size:8.5px;line-height:10px;height:10px;color:#3778BD;letter-spacing:-0.000px;">30,240</div>
<div class="t" style="right:639.80px;top:288px;font-size:8.5px;line-height:10px;height:10px;color:#3778BD;letter-spacing:-0.000px;">30,240</div>
<div class="t" style="right:597.80px;top:288px;font-size:8.5px;line-height:10px;height:10px;color:#3778BD;letter-spacing:-0.000px;">30,240</div>
<div class="t" style="right:554.80px;top:288px;font-size:8.5px;line-height:10px;height:10px;color:#3778BD;letter-spacing:-0.000px;">30,240</div>
<div class="t" style="right:511.80px;top:288px;font-size:8.5px;line-height:10px;height:10px;color:#3778BD;letter-spacing:-0.000px;">34,425</div>
<div class="t" style="right:469.80px;top:288px;font-size:8.5px;line-height:10px;height:10px;color:#3778BD;letter-spacing:-0.000px;">37,395</div>
<div class="t" style="right:426.80px;top:288px;font-size:8.5px;line-height:10px;height:10px;color:#3778BD;letter-spacing:-0.000px;">20,790</div>
<div class="t" style="right:383.80px;top:288px;font-size:8.5px;line-height:10px;height:10px;color:#3778BD;letter-spacing:-0.000px;">20,790</div>
<div class="t" style="right:336.80px;top:288px;font-size:8.5px;line-height:10px;height:10px;color:#3778BD;letter-spacing:-0.000px;">20,790</div>
<div class="t" style="right:293.80px;top:288px;font-size:8.5px;line-height:10px;height:10px;color:#3778BD;letter-spacing:-0.000px;">37,395</div>
<div class="t" style="right:250.80px;top:288px;font-size:8.5px;line-height:10px;height:10px;color:#3778BD;letter-spacing:-0.000px;">38,745</div>
<div class="t" style="right:208.80px;top:288px;font-size:8.5px;line-height:10px;height:10px;color:#3778BD;letter-spacing:-0.000px;">27,000</div>
<div class="t" style="right:162.80px;top:288px;font-size:8.5px;line-height:10px;height:10px;color:#3778BD;letter-spacing:-0.000px;">30,240</div>
<div class="t" style="right:119.80px;top:288px;font-size:8.5px;line-height:10px;height:10px;color:#3778BD;letter-spacing:-0.000px;">30,240</div>
<div class="t" style="right:76.80px;top:288px;font-size:8.5px;line-height:10px;height:10px;color:#3778BD;letter-spacing:-0.000px;">30,240</div>
<div class="t" style="right:682.80px;top:301px;font-size:8.5px;line-height:10px;height:10px;color:#3778BD;letter-spacing:-0.000px;">9,990</div>
<div class="t" style="right:639.80px;top:301px;font-size:8.5px;line-height:10px;height:10px;color:#3778BD;letter-spacing:-0.000px;">11,070</div>
<div class="t" style="right:597.80px;top:301px;font-size:8.5px;line-height:10px;height:10px;color:#3778BD;letter-spacing:-0.000px;">9,990</div>
<div class="t" style="right:554.80px;top:301px;font-size:8.5px;line-height:10px;height:10px;color:#3778BD;letter-spacing:-0.000px;">10,260</div>
<div class="t" style="right:511.80px;top:301px;font-size:8.5px;line-height:10px;height:10px;color:#3778BD;letter-spacing:-0.000px;">9,810</div>
<div class="t" style="right:469.80px;top:301px;font-size:8.5px;line-height:10px;height:10px;color:#3778BD;letter-spacing:-0.000px;">9,990</div>
<div class="t" style="right:426.80px;top:301px;font-size:8.5px;line-height:10px;height:10px;color:#3778BD;letter-spacing:-0.000px;">9,990</div>
<div class="t" style="right:383.80px;top:301px;font-size:8.5px;line-height:10px;height:10px;color:#3778BD;letter-spacing:-0.000px;">9,360</div>
<div class="t" style="right:336.80px;top:301px;font-size:8.5px;line-height:10px;height:10px;color:#3778BD;letter-spacing:-0.000px;">9,630</div>
<div class="t" style="right:293.80px;top:301px;font-size:8.5px;line-height:10px;height:10px;color:#3778BD;letter-spacing:-0.000px;">10,170</div>
<div class="t" style="right:250.80px;top:301px;font-size:8.5px;line-height:10px;height:10px;color:#3778BD;letter-spacing:-0.000px;">10,440</div>
<div class="t" style="right:208.80px;top:301px;font-size:8.5px;line-height:10px;height:10px;color:#3778BD;letter-spacing:-0.000px;">11,160</div>
<div class="t" style="right:162.80px;top:301px;font-size:8.5px;line-height:10px;height:10px;color:#3778BD;letter-spacing:-0.000px;">9,990</div>
<div class="t" style="right:119.80px;top:301px;font-size:8.5px;line-height:10px;height:10px;color:#3778BD;letter-spacing:-0.000px;">11,070</div>
<div class="t" style="right:76.80px;top:301px;font-size:8.5px;line-height:10px;height:10px;color:#3778BD;letter-spacing:-0.000px;">9,990</div>
<div class="t" style="right:682.80px;top:314px;font-size:8.5px;line-height:10px;height:10px;color:#3778BD;letter-spacing:-0.000px;">18,700</div>
<div class="t" style="right:639.80px;top:314px;font-size:8.5px;line-height:10px;height:10px;color:#3778BD;letter-spacing:-0.000px;">19,030</div>
<div class="t" style="right:597.80px;top:314px;font-size:8.5px;line-height:10px;height:10px;color:#3778BD;letter-spacing:-0.000px;">19,470</div>
<div class="t" style="right:554.80px;top:314px;font-size:8.5px;line-height:10px;height:10px;color:#3778BD;letter-spacing:-0.000px;">19,910</div>
<div class="t" style="right:511.80px;top:314px;font-size:8.5px;line-height:10px;height:10px;color:#3778BD;letter-spacing:-0.000px;">20,900</div>
<div class="t" style="right:469.80px;top:314px;font-size:8.5px;line-height:10px;height:10px;color:#3778BD;letter-spacing:-0.000px;">21,670</div>
<div class="t" style="right:426.80px;top:314px;font-size:8.5px;line-height:10px;height:10px;color:#3778BD;letter-spacing:-0.000px;">22,110</div>
<div class="t" style="right:383.80px;top:314px;font-size:8.5px;line-height:10px;height:10px;color:#3778BD;letter-spacing:-0.000px;">22,880</div>
<div class="t" style="right:336.80px;top:314px;font-size:8.5px;line-height:10px;height:10px;color:#3778BD;letter-spacing:-0.000px;">23,540</div>
<div class="t" style="right:293.80px;top:314px;font-size:8.5px;line-height:10px;height:10px;color:#3778BD;letter-spacing:-0.000px;">24,970</div>
<div class="t" style="right:250.80px;top:314px;font-size:8.5px;line-height:10px;height:10px;color:#3778BD;letter-spacing:-0.000px;">25,520</div>
<div class="t" style="right:208.80px;top:314px;font-size:8.5px;line-height:10px;height:10px;color:#3778BD;letter-spacing:-0.000px;">27,390</div>
<div class="t" style="right:162.80px;top:314px;font-size:8.5px;line-height:10px;height:10px;color:#3778BD;letter-spacing:-0.000px;">18,700</div>
<div class="t" style="right:119.80px;top:314px;font-size:8.5px;line-height:10px;height:10px;color:#3778BD;letter-spacing:-0.000px;">19,030</div>
<div class="t" style="right:76.80px;top:314px;font-size:8.5px;line-height:10px;height:10px;color:#3778BD;letter-spacing:-0.000px;">19,470</div>
<div class="t" style="right:682.80px;top:326px;font-size:8.5px;line-height:10px;height:10px;color:#3778BD;letter-spacing:-0.000px;">80,000</div>
<div class="t" style="right:639.80px;top:326px;font-size:8.5px;line-height:10px;height:10px;color:#3778BD;letter-spacing:-0.000px;">85,000</div>
<div class="t" style="right:597.80px;top:326px;font-size:8.5px;line-height:10px;height:10px;color:#3778BD;letter-spacing:-0.000px;">100,000</div>
<div class="t" style="right:554.80px;top:326px;font-size:8.5px;line-height:10px;height:10px;color:#3778BD;letter-spacing:-0.000px;">103,000</div>
<div class="t" style="right:511.80px;top:326px;font-size:8.5px;line-height:10px;height:10px;color:#3778BD;letter-spacing:-0.000px;">102,750</div>
<div class="t" style="right:469.80px;top:326px;font-size:8.5px;line-height:10px;height:10px;color:#3778BD;letter-spacing:-0.000px;">103,000</div>
<div class="t" style="right:426.80px;top:326px;font-size:8.5px;line-height:10px;height:10px;color:#3778BD;letter-spacing:-0.000px;">108,500</div>
<div class="t" style="right:383.80px;top:326px;font-size:8.5px;line-height:10px;height:10px;color:#3778BD;letter-spacing:-0.000px;">109,000</div>
<div class="t" style="right:336.80px;top:326px;font-size:8.5px;line-height:10px;height:10px;color:#3778BD;letter-spacing:-0.000px;">112,500</div>
<div class="t" style="right:293.80px;top:326px;font-size:8.5px;line-height:10px;height:10px;color:#3778BD;letter-spacing:-0.000px;">120,000</div>
<div class="t" style="right:250.80px;top:326px;font-size:8.5px;line-height:10px;height:10px;color:#3778BD;letter-spacing:-0.000px;">124,500</div>
<div class="t" style="right:208.80px;top:326px;font-size:8.5px;line-height:10px;height:10px;color:#3778BD;letter-spacing:-0.000px;">125,000</div>
<div class="t" style="right:162.80px;top:326px;font-size:8.5px;line-height:10px;height:10px;color:#3778BD;letter-spacing:-0.000px;">80,000</div>
<div class="t" style="right:119.80px;top:326px;font-size:8.5px;line-height:10px;height:10px;color:#3778BD;letter-spacing:-0.000px;">85,000</div>
<div class="t" style="right:76.80px;top:326px;font-size:8.5px;line-height:10px;height:10px;color:#3778BD;letter-spacing:-0.000px;">100,000</div>
<div class="t" style="right:682.80px;top:339px;font-size:8.5px;line-height:10px;height:10px;color:#3778BD;letter-spacing:-0.000px;">191,100</div>
<div class="t" style="right:639.80px;top:339px;font-size:8.5px;line-height:10px;height:10px;color:#3778BD;letter-spacing:-0.000px;">285,111</div>
<div class="t" style="right:597.80px;top:339px;font-size:8.5px;line-height:10px;height:10px;color:#3778BD;letter-spacing:-0.000px;">202,150</div>
<div class="t" style="right:554.80px;top:339px;font-size:8.5px;line-height:10px;height:10px;color:#3778BD;letter-spacing:-0.000px;">287,640</div>
<div class="t" style="right:511.80px;top:339px;font-size:8.5px;line-height:10px;height:10px;color:#3778BD;letter-spacing:-0.000px;">198,900</div>
<div class="t" style="right:469.80px;top:339px;font-size:8.5px;line-height:10px;height:10px;color:#3778BD;letter-spacing:-0.000px;">220,025</div>
<div class="t" style="right:426.80px;top:339px;font-size:8.5px;line-height:10px;height:10px;color:#3778BD;letter-spacing:-0.000px;">209,625</div>
<div class="t" style="right:383.80px;top:339px;font-size:8.5px;line-height:10px;height:10px;color:#3778BD;letter-spacing:-0.000px;">228,475</div>
<div class="t" style="right:336.80px;top:339px;font-size:8.5px;line-height:10px;height:10px;color:#3778BD;letter-spacing:-0.000px;">230,750</div>
<div class="t" style="right:293.80px;top:339px;font-size:8.5px;line-height:10px;height:10px;color:#3778BD;letter-spacing:-0.000px;">248,950</div>
<div class="t" style="right:250.80px;top:339px;font-size:8.5px;line-height:10px;height:10px;color:#3778BD;letter-spacing:-0.000px;">249,275</div>
<div class="t" style="right:208.80px;top:339px;font-size:8.5px;line-height:10px;height:10px;color:#3778BD;letter-spacing:-0.000px;">259,350</div>
<div class="t" style="right:162.80px;top:339px;font-size:8.5px;line-height:10px;height:10px;color:#3778BD;letter-spacing:-0.000px;">191,100</div>
<div class="t" style="right:119.80px;top:339px;font-size:8.5px;line-height:10px;height:10px;color:#3778BD;letter-spacing:-0.000px;">285,111</div>
<div class="t" style="right:76.80px;top:339px;font-size:8.5px;line-height:10px;height:10px;color:#3778BD;letter-spacing:-0.000px;">202,150</div>
<div class="t" style="right:682.70px;top:365px;font-size:8.5px;line-height:10px;height:10px;color:#3778BD;letter-spacing:-0.000px;">(450)</div>
<div class="t" style="right:639.70px;top:365px;font-size:8.5px;line-height:10px;height:10px;color:#3778BD;letter-spacing:-0.000px;">(450)</div>
<div class="t" style="right:597.70px;top:365px;font-size:8.5px;line-height:10px;height:10px;color:#3778BD;letter-spacing:-0.000px;">(450)</div>
<div class="t" style="right:554.70px;top:365px;font-size:8.5px;line-height:10px;height:10px;color:#3778BD;letter-spacing:-0.000px;">(450)</div>
<div class="t" style="right:511.70px;top:365px;font-size:8.5px;line-height:10px;height:10px;color:#3778BD;letter-spacing:-0.000px;">(450)</div>
<div class="t" style="right:469.70px;top:365px;font-size:8.5px;line-height:10px;height:10px;color:#3778BD;letter-spacing:-0.000px;">(450)</div>
<div class="t" style="right:426.70px;top:365px;font-size:8.5px;line-height:10px;height:10px;color:#3778BD;letter-spacing:-0.000px;">(450)</div>
<div class="t" style="right:383.70px;top:365px;font-size:8.5px;line-height:10px;height:10px;color:#3778BD;letter-spacing:-0.000px;">(450)</div>
<div class="t" style="right:336.70px;top:365px;font-size:8.5px;line-height:10px;height:10px;color:#3778BD;letter-spacing:-0.000px;">(450)</div>
<div class="t" style="right:293.70px;top:365px;font-size:8.5px;line-height:10px;height:10px;color:#3778BD;letter-spacing:-0.000px;">(450)</div>
<div class="t" style="right:250.70px;top:365px;font-size:8.5px;line-height:10px;height:10px;color:#3778BD;letter-spacing:-0.000px;">(450)</div>
<div class="t" style="right:208.70px;top:365px;font-size:8.5px;line-height:10px;height:10px;color:#3778BD;letter-spacing:-0.000px;">(450)</div>
<div class="t" style="right:162.70px;top:365px;font-size:8.5px;line-height:10px;height:10px;color:#3778BD;letter-spacing:-0.000px;">(450)</div>
<div class="t" style="right:119.70px;top:365px;font-size:8.5px;line-height:10px;height:10px;color:#3778BD;letter-spacing:-0.000px;">(450)</div>
<div class="t" style="right:76.70px;top:365px;font-size:8.5px;line-height:10px;height:10px;color:#3778BD;letter-spacing:-0.000px;">(450)</div>
<div class="t" style="right:29.80px;top:365px;font-size:8.5px;line-height:10px;height:10px;color:#3778BD;letter-spacing:-0.000px;">(5,400)</div>
<div class="t" style="right:682.70px;top:378px;font-size:8.5px;line-height:10px;height:10px;color:#3778BD;letter-spacing:-0.000px;">(10,000)</div>
<div class="t" style="right:639.70px;top:378px;font-size:8.5px;line-height:10px;height:10px;color:#3778BD;letter-spacing:-0.000px;">(9,850)</div>
<div class="t" style="right:597.70px;top:378px;font-size:8.5px;line-height:10px;height:10px;color:#3778BD;letter-spacing:-0.000px;">(9,700)</div>
<div class="t" style="right:554.70px;top:378px;font-size:8.5px;line-height:10px;height:10px;color:#3778BD;letter-spacing:-0.000px;">(9,550)</div>
<div class="t" style="right:511.70px;top:378px;font-size:8.5px;line-height:10px;height:10px;color:#3778BD;letter-spacing:-0.000px;">(9,400)</div>
<div class="t" style="right:469.70px;top:378px;font-size:8.5px;line-height:10px;height:10px;color:#3778BD;letter-spacing:-0.000px;">(9,250)</div>
<div class="t" style="right:426.70px;top:378px;font-size:8.5px;line-height:10px;height:10px;color:#3778BD;letter-spacing:-0.000px;">(9,100)</div>
<div class="t" style="right:383.70px;top:378px;font-size:8.5px;line-height:10px;height:10px;color:#3778BD;letter-spacing:-0.000px;">(8,950)</div>
<div class="t" style="right:336.70px;top:378px;font-size:8.5px;line-height:10px;height:10px;color:#3778BD;letter-spacing:-0.000px;">(8,800)</div>
<div class="t" style="right:293.70px;top:378px;font-size:8.5px;line-height:10px;height:10px;color:#3778BD;letter-spacing:-0.000px;">(8,650)</div>
<div class="t" style="right:250.70px;top:378px;font-size:8.5px;line-height:10px;height:10px;color:#3778BD;letter-spacing:-0.000px;">(8,500)</div>
<div class="t" style="right:208.70px;top:378px;font-size:8.5px;line-height:10px;height:10px;color:#3778BD;letter-spacing:-0.000px;">(8,350)</div>
<div class="t" style="right:162.70px;top:378px;font-size:8.5px;line-height:10px;height:10px;color:#3778BD;letter-spacing:-0.000px;">(8,200)</div>
<div class="t" style="right:119.70px;top:378px;font-size:8.5px;line-height:10px;height:10px;color:#3778BD;letter-spacing:-0.000px;">(8,050)</div>
<div class="t" style="right:76.70px;top:378px;font-size:8.5px;line-height:10px;height:10px;color:#3778BD;letter-spacing:-0.000px;">(7,900)</div>
<div class="t" style="right:682.70px;top:390px;font-size:8.5px;line-height:10px;height:10px;color:#3778BD;letter-spacing:-0.000px;">(90,473)</div>
<div class="t" style="right:639.70px;top:390px;font-size:8.5px;line-height:10px;height:10px;color:#3778BD;letter-spacing:-0.000px;">(111,132)</div>
<div class="t" style="right:597.70px;top:390px;font-size:8.5px;line-height:10px;height:10px;color:#3778BD;letter-spacing:-0.000px;">(98,148)</div>
<div class="t" style="right:554.70px;top:390px;font-size:8.5px;line-height:10px;height:10px;color:#3778BD;letter-spacing:-0.000px;">(116,576)</div>
<div class="t" style="right:511.70px;top:390px;font-size:8.5px;line-height:10px;height:10px;color:#3778BD;letter-spacing:-0.000px;">(101,135)</div>
<div class="t" style="right:469.70px;top:390px;font-size:8.5px;line-height:10px;height:10px;color:#3778BD;letter-spacing:-0.000px;">(107,398)</div>
<div class="t" style="right:426.70px;top:390px;font-size:8.5px;line-height:10px;height:10px;color:#3778BD;letter-spacing:-0.000px;">(103,962)</div>
<div class="t" style="right:383.70px;top:390px;font-size:8.5px;line-height:10px;height:10px;color:#3778BD;letter-spacing:-0.000px;">(108,958)</div>
<div class="t" style="right:336.70px;top:390px;font-size:8.5px;line-height:10px;height:10px;color:#3778BD;letter-spacing:-0.000px;">(111,458)</div>
<div class="t" style="right:293.70px;top:390px;font-size:8.5px;line-height:10px;height:10px;color:#3778BD;letter-spacing:-0.000px;">(122,398)</div>
<div class="t" style="right:250.70px;top:390px;font-size:8.5px;line-height:10px;height:10px;color:#3778BD;letter-spacing:-0.000px;">(124,788)</div>
<div class="t" style="right:208.70px;top:390px;font-size:8.5px;line-height:10px;height:10px;color:#3778BD;letter-spacing:-0.000px;">(122,992)</div>
<div class="t" style="right:162.70px;top:390px;font-size:8.5px;line-height:10px;height:10px;color:#3778BD;letter-spacing:-0.000px;">(105,398)</div>
<div class="t" style="right:119.70px;top:390px;font-size:8.5px;line-height:10px;height:10px;color:#3778BD;letter-spacing:-0.000px;">(126,098)</div>
<div class="t" style="right:76.70px;top:390px;font-size:8.5px;line-height:10px;height:10px;color:#3778BD;letter-spacing:-0.000px;">(113,005)</div>
<div class="t" style="right:685.50px;top:403px;font-size:8.5px;line-height:10px;height:10px;color:#fff;letter-spacing:-0.000px;">473,375</div>
<div class="t" style="right:642.50px;top:403px;font-size:8.5px;line-height:10px;height:10px;color:#fff;letter-spacing:-0.000px;">576,666</div>
<div class="t" style="right:600.50px;top:403px;font-size:8.5px;line-height:10px;height:10px;color:#fff;letter-spacing:-0.000px;">511,750</div>
<div class="t" style="right:557.50px;top:403px;font-size:8.5px;line-height:10px;height:10px;color:#fff;letter-spacing:-0.000px;">603,890</div>
<div class="t" style="right:514.50px;top:403px;font-size:8.5px;line-height:10px;height:10px;color:#fff;letter-spacing:-0.000px;">526,685</div>
<div class="t" style="right:472.50px;top:403px;font-size:8.5px;line-height:10px;height:10px;color:#fff;letter-spacing:-0.000px;">558,000</div>
<div class="t" style="right:429.50px;top:403px;font-size:8.5px;line-height:10px;height:10px;color:#fff;letter-spacing:-0.000px;">540,820</div>
<div class="t" style="right:386.50px;top:403px;font-size:8.5px;line-height:10px;height:10px;color:#fff;letter-spacing:-0.000px;">565,800</div>
<div class="t" style="right:339.50px;top:403px;font-size:8.5px;line-height:10px;height:10px;color:#fff;letter-spacing:-0.000px;">578,300</div>
<div class="t" style="right:296.50px;top:403px;font-size:8.5px;line-height:10px;height:10px;color:#fff;letter-spacing:-0.000px;">633,000</div>
<div class="t" style="right:253.50px;top:403px;font-size:8.5px;line-height:10px;height:10px;color:#fff;letter-spacing:-0.000px;">644,950</div>
<div class="t" style="right:211.50px;top:403px;font-size:8.5px;line-height:10px;height:10px;color:#fff;letter-spacing:-0.000px;">635,970</div>
<div class="t" style="right:165.50px;top:403px;font-size:8.5px;line-height:10px;height:10px;color:#fff;letter-spacing:-0.000px;">546,400</div>
<div class="t" style="right:122.50px;top:403px;font-size:8.5px;line-height:10px;height:10px;color:#fff;letter-spacing:-0.000px;">649,901</div>
<div class="t" style="right:79.50px;top:403px;font-size:8.5px;line-height:10px;height:10px;color:#fff;letter-spacing:-0.000px;">584,435</div>
<div class="t" style="right:32.60px;top:403px;font-size:8.5px;line-height:10px;height:10px;color:#fff;letter-spacing:-0.000px;">6,849,206</div>
<div class="t" style="right:682.70px;top:416px;font-size:8.5px;line-height:10px;height:10px;color:#fff;letter-spacing:-0.000px;">(100,923)</div>
<div class="t" style="right:639.70px;top:416px;font-size:8.5px;line-height:10px;height:10px;color:#fff;letter-spacing:-0.000px;">(121,432)</div>
<div class="t" style="right:597.70px;top:416px;font-size:8.5px;line-height:10px;height:10px;color:#fff;letter-spacing:-0.000px;">(108,298)</div>
<div class="t" style="right:554.70px;top:416px;font-size:8.5px;line-height:10px;height:10px;color:#fff;letter-spacing:-0.000px;">(126,576)</div>
<div class="t" style="right:511.70px;top:416px;font-size:8.5px;line-height:10px;height:10px;color:#fff;letter-spacing:-0.000px;">(110,985)</div>
<div class="t" style="right:469.70px;top:416px;font-size:8.5px;line-height:10px;height:10px;color:#fff;letter-spacing:-0.000px;">(117,098)</div>
<div class="t" style="right:426.70px;top:416px;font-size:8.5px;line-height:10px;height:10px;color:#fff;letter-spacing:-0.000px;">(113,512)</div>
<div class="t" style="right:383.70px;top:416px;font-size:8.5px;line-height:10px;height:10px;color:#fff;letter-spacing:-0.000px;">(118,358)</div>
<div class="t" style="right:336.70px;top:416px;font-size:8.5px;line-height:10px;height:10px;color:#fff;letter-spacing:-0.000px;">(120,708)</div>
<div class="t" style="right:293.70px;top:416px;font-size:8.5px;line-height:10px;height:10px;color:#fff;letter-spacing:-0.000px;">(131,498)</div>
<div class="t" style="right:250.70px;top:416px;font-size:8.5px;line-height:10px;height:10px;color:#fff;letter-spacing:-0.000px;">(133,738)</div>
<div class="t" style="right:208.70px;top:416px;font-size:8.5px;line-height:10px;height:10px;color:#fff;letter-spacing:-0.000px;">(131,792)</div>
<div class="t" style="right:162.70px;top:416px;font-size:8.5px;line-height:10px;height:10px;color:#fff;letter-spacing:-0.000px;">(114,048)</div>
<div class="t" style="right:119.70px;top:416px;font-size:8.5px;line-height:10px;height:10px;color:#fff;letter-spacing:-0.000px;">(134,598)</div>
<div class="t" style="right:76.70px;top:416px;font-size:8.5px;line-height:10px;height:10px;color:#fff;letter-spacing:-0.000px;">(121,355)</div>
<div class="t" style="right:29.80px;top:416px;font-size:8.5px;line-height:10px;height:10px;color:#fff;letter-spacing:0.000px;font-style:italic;">########</div>
<div class="t" style="right:685.50px;top:429px;font-size:8.5px;line-height:10px;height:10px;color:#3778BD;letter-spacing:-0.000px;">372,452</div>
<div class="t" style="right:642.50px;top:429px;font-size:8.5px;line-height:10px;height:10px;color:#3778BD;letter-spacing:-0.000px;">455,234</div>
<div class="t" style="right:600.50px;top:429px;font-size:8.5px;line-height:10px;height:10px;color:#3778BD;letter-spacing:-0.000px;">403,452</div>
<div class="t" style="right:557.50px;top:429px;font-size:8.5px;line-height:10px;height:10px;color:#3778BD;letter-spacing:-0.000px;">477,314</div>
<div class="t" style="right:514.50px;top:429px;font-size:8.5px;line-height:10px;height:10px;color:#3778BD;letter-spacing:-0.000px;">415,700</div>
<div class="t" style="right:472.50px;top:429px;font-size:8.5px;line-height:10px;height:10px;color:#3778BD;letter-spacing:-0.000px;">440,902</div>
<div class="t" style="right:429.50px;top:429px;font-size:8.5px;line-height:10px;height:10px;color:#3778BD;letter-spacing:-0.000px;">427,308</div>
<div class="t" style="right:386.50px;top:429px;font-size:8.5px;line-height:10px;height:10px;color:#3778BD;letter-spacing:-0.000px;">447,442</div>
<div class="t" style="right:339.50px;top:429px;font-size:8.5px;line-height:10px;height:10px;color:#3778BD;letter-spacing:-0.000px;">457,592</div>
<div class="t" style="right:296.50px;top:429px;font-size:8.5px;line-height:10px;height:10px;color:#3778BD;letter-spacing:-0.000px;">501,502</div>
<div class="t" style="right:253.50px;top:429px;font-size:8.5px;line-height:10px;height:10px;color:#3778BD;letter-spacing:-0.000px;">511,212</div>
<div class="t" style="right:211.50px;top:429px;font-size:8.5px;line-height:10px;height:10px;color:#3778BD;letter-spacing:-0.000px;">504,178</div>
<div class="t" style="right:165.50px;top:429px;font-size:8.5px;line-height:10px;height:10px;color:#3778BD;letter-spacing:-0.000px;">432,352</div>
<div class="t" style="right:122.50px;top:429px;font-size:8.5px;line-height:10px;height:10px;color:#3778BD;letter-spacing:-0.000px;">515,303</div>
<div class="t" style="right:79.50px;top:429px;font-size:8.5px;line-height:10px;height:10px;color:#3778BD;letter-spacing:-0.000px;">463,080</div>
<div class="t" style="right:32.60px;top:429px;font-size:8.5px;line-height:10px;height:10px;color:#3778BD;letter-spacing:-0.000px;">5,414,284</div>
<div class="t" style="right:685.50px;top:442px;font-size:8.5px;line-height:10px;height:10px;color:#3778BD;letter-spacing:-0.000px;">371,902</div>
<div class="t" style="right:642.50px;top:442px;font-size:8.5px;line-height:10px;height:10px;color:#3778BD;letter-spacing:-0.000px;">454,684</div>
<div class="t" style="right:600.50px;top:442px;font-size:8.5px;line-height:10px;height:10px;color:#3778BD;letter-spacing:-0.000px;">402,902</div>
<div class="t" style="right:557.50px;top:442px;font-size:8.5px;line-height:10px;height:10px;color:#3778BD;letter-spacing:-0.000px;">476,764</div>
<div class="t" style="right:514.50px;top:442px;font-size:8.5px;line-height:10px;height:10px;color:#3778BD;letter-spacing:-0.000px;">415,150</div>
<div class="t" style="right:472.50px;top:442px;font-size:8.5px;line-height:10px;height:10px;color:#3778BD;letter-spacing:-0.000px;">440,352</div>
<div class="t" style="right:429.50px;top:442px;font-size:8.5px;line-height:10px;height:10px;color:#3778BD;letter-spacing:-0.000px;">426,758</div>
<div class="t" style="right:386.50px;top:442px;font-size:8.5px;line-height:10px;height:10px;color:#3778BD;letter-spacing:-0.000px;">446,892</div>
<div class="t" style="right:339.50px;top:442px;font-size:8.5px;line-height:10px;height:10px;color:#3778BD;letter-spacing:-0.000px;">457,042</div>
<div class="t" style="right:296.50px;top:442px;font-size:8.5px;line-height:10px;height:10px;color:#3778BD;letter-spacing:-0.000px;">500,952</div>
<div class="t" style="right:253.50px;top:442px;font-size:8.5px;line-height:10px;height:10px;color:#3778BD;letter-spacing:-0.000px;">510,662</div>
<div class="t" style="right:211.50px;top:442px;font-size:8.5px;line-height:10px;height:10px;color:#3778BD;letter-spacing:-0.000px;">503,628</div>
<div class="t" style="right:165.50px;top:442px;font-size:8.5px;line-height:10px;height:10px;color:#3778BD;letter-spacing:-0.000px;">431,802</div>
<div class="t" style="right:122.50px;top:442px;font-size:8.5px;line-height:10px;height:10px;color:#3778BD;letter-spacing:-0.000px;">514,753</div>
<div class="t" style="right:79.50px;top:442px;font-size:8.5px;line-height:10px;height:10px;color:#3778BD;letter-spacing:-0.000px;">462,530</div>
<div class="t" style="right:682.70px;top:467px;font-size:8.5px;line-height:10px;height:10px;color:#3778BD;letter-spacing:-0.000px;">(50,000)</div>
<svg class="r" style="left:363px;top:472px" width="3" height="2"><rect x="0.30" y="0.10" width="2.30" height="0.95" fill="#3778BD" opacity="0.7"/></svg>
<svg class="r" style="left:405px;top:472px" width="4" height="2"><rect x="0.80" y="0.10" width="2.30" height="0.95" fill="#3778BD" opacity="0.7"/></svg>
<svg class="r" style="left:448px;top:472px" width="3" height="2"><rect x="0.30" y="0.10" width="2.30" height="0.95" fill="#3778BD" opacity="0.7"/></svg>
<svg class="r" style="left:491px;top:472px" width="3" height="2"><rect x="0.30" y="0.10" width="2.30" height="0.95" fill="#3778BD" opacity="0.7"/></svg>
<svg class="r" style="left:533px;top:472px" width="4" height="2"><rect x="0.80" y="0.10" width="2.30" height="0.95" fill="#3778BD" opacity="0.7"/></svg>
<svg class="r" style="left:576px;top:472px" width="3" height="2"><rect x="0.30" y="0.10" width="2.30" height="0.95" fill="#3778BD" opacity="0.7"/></svg>
<svg class="r" style="left:619px;top:472px" width="3" height="2"><rect x="0.30" y="0.10" width="2.30" height="0.95" fill="#3778BD" opacity="0.7"/></svg>
<svg class="r" style="left:664px;top:472px" width="3" height="2"><rect x="0.30" y="0.10" width="2.30" height="0.95" fill="#3778BD" opacity="0.7"/></svg>
<svg class="r" style="left:709px;top:472px" width="3" height="2"><rect x="0.30" y="0.10" width="2.30" height="0.95" fill="#3778BD" opacity="0.7"/></svg>
<svg class="r" style="left:752px;top:472px" width="3" height="2"><rect x="0.30" y="0.10" width="2.30" height="0.95" fill="#3778BD" opacity="0.7"/></svg>
<svg class="r" style="left:794px;top:472px" width="4" height="2"><rect x="0.80" y="0.10" width="2.30" height="0.95" fill="#3778BD" opacity="0.7"/></svg>
<svg class="r" style="left:838px;top:472px" width="4" height="2"><rect x="0.80" y="0.10" width="2.30" height="0.95" fill="#3778BD" opacity="0.7"/></svg>
<svg class="r" style="left:883px;top:472px" width="3" height="2"><rect x="0.30" y="0.10" width="2.30" height="0.95" fill="#3778BD" opacity="0.7"/></svg>
<svg class="r" style="left:926px;top:472px" width="3" height="2"><rect x="0.30" y="0.10" width="2.30" height="0.95" fill="#3778BD" opacity="0.7"/></svg>
<svg class="r" style="left:363px;top:485px" width="3" height="2"><rect x="0.30" y="0.10" width="2.30" height="0.95" fill="#3778BD" opacity="0.7"/></svg>
<svg class="r" style="left:405px;top:485px" width="4" height="2"><rect x="0.80" y="0.10" width="2.30" height="0.95" fill="#3778BD" opacity="0.7"/></svg>
<svg class="r" style="left:448px;top:485px" width="3" height="2"><rect x="0.30" y="0.10" width="2.30" height="0.95" fill="#3778BD" opacity="0.7"/></svg>
<svg class="r" style="left:491px;top:485px" width="3" height="2"><rect x="0.30" y="0.10" width="2.30" height="0.95" fill="#3778BD" opacity="0.7"/></svg>
<svg class="r" style="left:533px;top:485px" width="4" height="2"><rect x="0.80" y="0.10" width="2.30" height="0.95" fill="#3778BD" opacity="0.7"/></svg>
<svg class="r" style="left:576px;top:485px" width="3" height="2"><rect x="0.30" y="0.10" width="2.30" height="0.95" fill="#3778BD" opacity="0.7"/></svg>
<svg class="r" style="left:619px;top:485px" width="3" height="2"><rect x="0.30" y="0.10" width="2.30" height="0.95" fill="#3778BD" opacity="0.7"/></svg>
<svg class="r" style="left:664px;top:485px" width="3" height="2"><rect x="0.30" y="0.10" width="2.30" height="0.95" fill="#3778BD" opacity="0.7"/></svg>
<svg class="r" style="left:709px;top:485px" width="3" height="2"><rect x="0.30" y="0.10" width="2.30" height="0.95" fill="#3778BD" opacity="0.7"/></svg>
<svg class="r" style="left:752px;top:485px" width="3" height="2"><rect x="0.30" y="0.10" width="2.30" height="0.95" fill="#3778BD" opacity="0.7"/></svg>
<svg class="r" style="left:794px;top:485px" width="4" height="2"><rect x="0.80" y="0.10" width="2.30" height="0.95" fill="#3778BD" opacity="0.7"/></svg>
<svg class="r" style="left:838px;top:485px" width="4" height="2"><rect x="0.80" y="0.10" width="2.30" height="0.95" fill="#3778BD" opacity="0.7"/></svg>
<svg class="r" style="left:883px;top:485px" width="3" height="2"><rect x="0.30" y="0.10" width="2.30" height="0.95" fill="#3778BD" opacity="0.7"/></svg>
<svg class="r" style="left:926px;top:485px" width="3" height="2"><rect x="0.30" y="0.10" width="2.30" height="0.95" fill="#3778BD" opacity="0.7"/></svg>
<div class="t" style="right:682.70px;top:493px;font-size:8.5px;line-height:10px;height:10px;color:#3778BD;letter-spacing:-0.000px;">(50,000)</div>
<svg class="r" style="left:378px;top:498px" width="3" height="2"><rect x="0.70" y="0.10" width="2.30" height="0.95" fill="#3778BD" opacity="0.7"/></svg>
<svg class="r" style="left:420px;top:498px" width="3" height="2"><rect x="0.70" y="0.10" width="2.30" height="0.95" fill="#3778BD" opacity="0.7"/></svg>
<svg class="r" style="left:463px;top:498px" width="3" height="2"><rect x="0.70" y="0.10" width="2.30" height="0.95" fill="#3778BD" opacity="0.7"/></svg>
<svg class="r" style="left:506px;top:498px" width="3" height="2"><rect x="0.70" y="0.10" width="2.30" height="0.95" fill="#3778BD" opacity="0.7"/></svg>
<svg class="r" style="left:548px;top:498px" width="3" height="2"><rect x="0.70" y="0.10" width="2.30" height="0.95" fill="#3778BD" opacity="0.7"/></svg>
<svg class="r" style="left:591px;top:498px" width="3" height="2"><rect x="0.70" y="0.10" width="2.30" height="0.95" fill="#3778BD" opacity="0.7"/></svg>
<svg class="r" style="left:634px;top:498px" width="3" height="2"><rect x="0.70" y="0.10" width="2.30" height="0.95" fill="#3778BD" opacity="0.7"/></svg>
<svg class="r" style="left:681px;top:498px" width="3" height="2"><rect x="0.70" y="0.10" width="2.30" height="0.95" fill="#3778BD" opacity="0.7"/></svg>
<svg class="r" style="left:724px;top:498px" width="3" height="2"><rect x="0.70" y="0.10" width="2.30" height="0.95" fill="#3778BD" opacity="0.7"/></svg>
<svg class="r" style="left:767px;top:498px" width="3" height="2"><rect x="0.70" y="0.10" width="2.30" height="0.95" fill="#3778BD" opacity="0.7"/></svg>
<svg class="r" style="left:809px;top:498px" width="3" height="2"><rect x="0.70" y="0.10" width="2.30" height="0.95" fill="#3778BD" opacity="0.7"/></svg>
<svg class="r" style="left:855px;top:498px" width="3" height="2"><rect x="0.70" y="0.10" width="2.30" height="0.95" fill="#3778BD" opacity="0.7"/></svg>
<svg class="r" style="left:898px;top:498px" width="3" height="2"><rect x="0.70" y="0.10" width="2.30" height="0.95" fill="#3778BD" opacity="0.7"/></svg>
<svg class="r" style="left:941px;top:498px" width="3" height="2"><rect x="0.70" y="0.10" width="2.30" height="0.95" fill="#3778BD" opacity="0.7"/></svg>
<div class="t" style="right:682.70px;top:519px;font-size:8.5px;line-height:10px;height:10px;color:#3778BD;letter-spacing:-0.000px;">(50,000)</div>
<svg class="r" style="left:363px;top:524px" width="3" height="2"><rect x="0.30" y="0.10" width="2.30" height="0.95" fill="#3778BD" opacity="0.7"/></svg>
<svg class="r" style="left:405px;top:524px" width="4" height="2"><rect x="0.80" y="0.10" width="2.30" height="0.95" fill="#3778BD" opacity="0.7"/></svg>
<svg class="r" style="left:448px;top:524px" width="3" height="2"><rect x="0.30" y="0.10" width="2.30" height="0.95" fill="#3778BD" opacity="0.7"/></svg>
<svg class="r" style="left:491px;top:524px" width="3" height="2"><rect x="0.30" y="0.10" width="2.30" height="0.95" fill="#3778BD" opacity="0.7"/></svg>
<svg class="r" style="left:533px;top:524px" width="4" height="2"><rect x="0.80" y="0.10" width="2.30" height="0.95" fill="#3778BD" opacity="0.7"/></svg>
<svg class="r" style="left:576px;top:524px" width="3" height="2"><rect x="0.30" y="0.10" width="2.30" height="0.95" fill="#3778BD" opacity="0.7"/></svg>
<svg class="r" style="left:619px;top:524px" width="3" height="2"><rect x="0.30" y="0.10" width="2.30" height="0.95" fill="#3778BD" opacity="0.7"/></svg>
<svg class="r" style="left:664px;top:524px" width="3" height="2"><rect x="0.30" y="0.10" width="2.30" height="0.95" fill="#3778BD" opacity="0.7"/></svg>
<svg class="r" style="left:709px;top:524px" width="3" height="2"><rect x="0.30" y="0.10" width="2.30" height="0.95" fill="#3778BD" opacity="0.7"/></svg>
<svg class="r" style="left:752px;top:524px" width="3" height="2"><rect x="0.30" y="0.10" width="2.30" height="0.95" fill="#3778BD" opacity="0.7"/></svg>
<svg class="r" style="left:794px;top:524px" width="4" height="2"><rect x="0.80" y="0.10" width="2.30" height="0.95" fill="#3778BD" opacity="0.7"/></svg>
<svg class="r" style="left:838px;top:524px" width="4" height="2"><rect x="0.80" y="0.10" width="2.30" height="0.95" fill="#3778BD" opacity="0.7"/></svg>
<svg class="r" style="left:883px;top:524px" width="3" height="2"><rect x="0.30" y="0.10" width="2.30" height="0.95" fill="#3778BD" opacity="0.7"/></svg>
<svg class="r" style="left:926px;top:524px" width="3" height="2"><rect x="0.30" y="0.10" width="2.30" height="0.95" fill="#3778BD" opacity="0.7"/></svg>
<svg class="r" style="left:363px;top:537px" width="3" height="2"><rect x="0.30" y="0.10" width="2.30" height="0.95" fill="#3778BD" opacity="0.7"/></svg>
<svg class="r" style="left:405px;top:537px" width="4" height="2"><rect x="0.80" y="0.10" width="2.30" height="0.95" fill="#3778BD" opacity="0.7"/></svg>
<svg class="r" style="left:448px;top:537px" width="3" height="2"><rect x="0.30" y="0.10" width="2.30" height="0.95" fill="#3778BD" opacity="0.7"/></svg>
<svg class="r" style="left:491px;top:537px" width="3" height="2"><rect x="0.30" y="0.10" width="2.30" height="0.95" fill="#3778BD" opacity="0.7"/></svg>
<svg class="r" style="left:533px;top:537px" width="4" height="2"><rect x="0.80" y="0.10" width="2.30" height="0.95" fill="#3778BD" opacity="0.7"/></svg>
<svg class="r" style="left:576px;top:537px" width="3" height="2"><rect x="0.30" y="0.10" width="2.30" height="0.95" fill="#3778BD" opacity="0.7"/></svg>
<svg class="r" style="left:619px;top:537px" width="3" height="2"><rect x="0.30" y="0.10" width="2.30" height="0.95" fill="#3778BD" opacity="0.7"/></svg>
<svg class="r" style="left:664px;top:537px" width="3" height="2"><rect x="0.30" y="0.10" width="2.30" height="0.95" fill="#3778BD" opacity="0.7"/></svg>
<svg class="r" style="left:709px;top:537px" width="3" height="2"><rect x="0.30" y="0.10" width="2.30" height="0.95" fill="#3778BD" opacity="0.7"/></svg>
<svg class="r" style="left:752px;top:537px" width="3" height="2"><rect x="0.30" y="0.10" width="2.30" height="0.95" fill="#3778BD" opacity="0.7"/></svg>
<svg class="r" style="left:794px;top:537px" width="4" height="2"><rect x="0.80" y="0.10" width="2.30" height="0.95" fill="#3778BD" opacity="0.7"/></svg>
<svg class="r" style="left:838px;top:537px" width="4" height="2"><rect x="0.80" y="0.10" width="2.30" height="0.95" fill="#3778BD" opacity="0.7"/></svg>
<svg class="r" style="left:883px;top:537px" width="3" height="2"><rect x="0.30" y="0.10" width="2.30" height="0.95" fill="#3778BD" opacity="0.7"/></svg>
<svg class="r" style="left:926px;top:537px" width="3" height="2"><rect x="0.30" y="0.10" width="2.30" height="0.95" fill="#3778BD" opacity="0.7"/></svg>
<svg class="r" style="left:363px;top:549px" width="3" height="2"><rect x="0.30" y="0.10" width="2.30" height="0.95" fill="#3778BD" opacity="0.7"/></svg>
<svg class="r" style="left:405px;top:549px" width="4" height="2"><rect x="0.80" y="0.10" width="2.30" height="0.95" fill="#3778BD" opacity="0.7"/></svg>
<svg class="r" style="left:448px;top:549px" width="3" height="2"><rect x="0.30" y="0.10" width="2.30" height="0.95" fill="#3778BD" opacity="0.7"/></svg>
<svg class="r" style="left:491px;top:549px" width="3" height="2"><rect x="0.30" y="0.10" width="2.30" height="0.95" fill="#3778BD" opacity="0.7"/></svg>
<svg class="r" style="left:533px;top:549px" width="4" height="2"><rect x="0.80" y="0.10" width="2.30" height="0.95" fill="#3778BD" opacity="0.7"/></svg>
<svg class="r" style="left:576px;top:549px" width="3" height="2"><rect x="0.30" y="0.10" width="2.30" height="0.95" fill="#3778BD" opacity="0.7"/></svg>
<svg class="r" style="left:619px;top:549px" width="3" height="2"><rect x="0.30" y="0.10" width="2.30" height="0.95" fill="#3778BD" opacity="0.7"/></svg>
<svg class="r" style="left:664px;top:549px" width="3" height="2"><rect x="0.30" y="0.10" width="2.30" height="0.95" fill="#3778BD" opacity="0.7"/></svg>
<svg class="r" style="left:709px;top:549px" width="3" height="2"><rect x="0.30" y="0.10" width="2.30" height="0.95" fill="#3778BD" opacity="0.7"/></svg>
<svg class="r" style="left:752px;top:549px" width="3" height="2"><rect x="0.30" y="0.10" width="2.30" height="0.95" fill="#3778BD" opacity="0.7"/></svg>
<svg class="r" style="left:794px;top:549px" width="4" height="2"><rect x="0.80" y="0.10" width="2.30" height="0.95" fill="#3778BD" opacity="0.7"/></svg>
<svg class="r" style="left:838px;top:549px" width="4" height="2"><rect x="0.80" y="0.10" width="2.30" height="0.95" fill="#3778BD" opacity="0.7"/></svg>
<svg class="r" style="left:883px;top:549px" width="3" height="2"><rect x="0.30" y="0.10" width="2.30" height="0.95" fill="#3778BD" opacity="0.7"/></svg>
<svg class="r" style="left:926px;top:549px" width="3" height="2"><rect x="0.30" y="0.10" width="2.30" height="0.95" fill="#3778BD" opacity="0.7"/></svg>
<svg class="r" style="left:363px;top:562px" width="3" height="2"><rect x="0.30" y="0.10" width="2.30" height="0.95" fill="#3778BD" opacity="0.7"/></svg>
<svg class="r" style="left:405px;top:562px" width="4" height="2"><rect x="0.80" y="0.10" width="2.30" height="0.95" fill="#3778BD" opacity="0.7"/></svg>
<svg class="r" style="left:448px;top:562px" width="3" height="2"><rect x="0.30" y="0.10" width="2.30" height="0.95" fill="#3778BD" opacity="0.7"/></svg>
<svg class="r" style="left:491px;top:562px" width="3" height="2"><rect x="0.30" y="0.10" width="2.30" height="0.95" fill="#3778BD" opacity="0.7"/></svg>
<svg class="r" style="left:533px;top:562px" width="4" height="2"><rect x="0.80" y="0.10" width="2.30" height="0.95" fill="#3778BD" opacity="0.7"/></svg>
<svg class="r" style="left:576px;top:562px" width="3" height="2"><rect x="0.30" y="0.10" width="2.30" height="0.95" fill="#3778BD" opacity="0.7"/></svg>
<svg class="r" style="left:619px;top:562px" width="3" height="2"><rect x="0.30" y="0.10" width="2.30" height="0.95" fill="#3778BD" opacity="0.7"/></svg>
<svg class="r" style="left:664px;top:562px" width="3" height="2"><rect x="0.30" y="0.10" width="2.30" height="0.95" fill="#3778BD" opacity="0.7"/></svg>
<svg class="r" style="left:709px;top:562px" width="3" height="2"><rect x="0.30" y="0.10" width="2.30" height="0.95" fill="#3778BD" opacity="0.7"/></svg>
<svg class="r" style="left:752px;top:562px" width="3" height="2"><rect x="0.30" y="0.10" width="2.30" height="0.95" fill="#3778BD" opacity="0.7"/></svg>
<svg class="r" style="left:794px;top:562px" width="4" height="2"><rect x="0.80" y="0.10" width="2.30" height="0.95" fill="#3778BD" opacity="0.7"/></svg>
<svg class="r" style="left:838px;top:562px" width="4" height="2"><rect x="0.80" y="0.10" width="2.30" height="0.95" fill="#3778BD" opacity="0.7"/></svg>
<svg class="r" style="left:883px;top:562px" width="3" height="2"><rect x="0.30" y="0.10" width="2.30" height="0.95" fill="#3778BD" opacity="0.7"/></svg>
<svg class="r" style="left:926px;top:562px" width="3" height="2"><rect x="0.30" y="0.10" width="2.30" height="0.95" fill="#3778BD" opacity="0.7"/></svg>
<div class="t" style="right:639.70px;top:570px;font-size:8.5px;line-height:10px;height:10px;color:#3778BD;letter-spacing:-0.000px;">(750)</div>
<div class="t" style="right:597.70px;top:570px;font-size:8.5px;line-height:10px;height:10px;color:#3778BD;letter-spacing:-0.000px;">(750)</div>
<div class="t" style="right:554.70px;top:570px;font-size:8.5px;line-height:10px;height:10px;color:#3778BD;letter-spacing:-0.000px;">(750)</div>
<div class="t" style="right:511.70px;top:570px;font-size:8.5px;line-height:10px;height:10px;color:#3778BD;letter-spacing:-0.000px;">(750)</div>
<div class="t" style="right:469.70px;top:570px;font-size:8.5px;line-height:10px;height:10px;color:#3778BD;letter-spacing:-0.000px;">(750)</div>
<div class="t" style="right:426.70px;top:570px;font-size:8.5px;line-height:10px;height:10px;color:#3778BD;letter-spacing:-0.000px;">(750)</div>
<div class="t" style="right:383.70px;top:570px;font-size:8.5px;line-height:10px;height:10px;color:#3778BD;letter-spacing:-0.000px;">(750)</div>
<div class="t" style="right:336.70px;top:570px;font-size:8.5px;line-height:10px;height:10px;color:#3778BD;letter-spacing:-0.000px;">(750)</div>
<div class="t" style="right:293.70px;top:570px;font-size:8.5px;line-height:10px;height:10px;color:#3778BD;letter-spacing:-0.000px;">(750)</div>
<div class="t" style="right:250.70px;top:570px;font-size:8.5px;line-height:10px;height:10px;color:#3778BD;letter-spacing:-0.000px;">(750)</div>
<div class="t" style="right:208.70px;top:570px;font-size:8.5px;line-height:10px;height:10px;color:#3778BD;letter-spacing:-0.000px;">(750)</div>
<div class="t" style="right:162.70px;top:570px;font-size:8.5px;line-height:10px;height:10px;color:#3778BD;letter-spacing:-0.000px;">(750)</div>
<div class="t" style="right:119.70px;top:570px;font-size:8.5px;line-height:10px;height:10px;color:#3778BD;letter-spacing:-0.000px;">(750)</div>
<div class="t" style="right:76.70px;top:570px;font-size:8.5px;line-height:10px;height:10px;color:#3778BD;letter-spacing:-0.000px;">(750)</div>
<div class="t" style="right:29.80px;top:570px;font-size:8.5px;line-height:10px;height:10px;color:#3778BD;letter-spacing:-0.000px;">(9,000)</div>
<svg class="r" style="left:949px;top:363.2px" width="4" height="4" viewBox="0 0 4 4"><path d="M0 0H4L0 3.6Z" fill="#1E8A3C"/></svg>
<svg class="r" style="left:949px;top:568px" width="4" height="4.5" viewBox="0 0 4 4.5"><path d="M0 0.4H4L0 4.5Z" fill="#1E8A3C"/></svg>
<svg class="r" style="left:950px;top:554.3px" width="13.5" height="13.5" viewBox="0 0 13.5 13.5"><rect x="0.4" y="0.4" width="12.6" height="12.6" fill="#fff" stroke="#C8C8C8" stroke-width="0.8"/><rect x="1.9" y="3" width="4.2" height="2.2" fill="#2B6CE0"/><rect x="6.1" y="3" width="4.2" height="2.2" fill="#fff" stroke="#aaa" stroke-width="0.5"/><rect x="1.9" y="5.6" width="4" height="2.2" fill="#fff" stroke="#bbb" stroke-width="0.5"/><rect x="1.9" y="8.2" width="4" height="2.2" fill="#fff" stroke="#bbb" stroke-width="0.5"/><path d="M7.4 9.5H10.6M9 7.9V11.1" stroke="#888" stroke-width="0.9"/></svg>
<div class="r" style="left:1011px;top:52px;width:13px;height:13px;background:#F0F0F0;"></div>
<div class="r" style="left:1011px;top:65px;width:13px;height:508.3px;background:#ECEDF1;"></div>
<svg class="r" style="left:1012px;top:53px" width="12" height="521"><rect x="0.00" y="0.00" width="11.40" height="520.70" fill="#F7F7F7" rx="5.6"/></svg>
<svg class="r" style="left:1015px;top:63px" width="6" height="296"><rect x="0.20" y="0.40" width="5.60" height="294.90" fill="#6E6E6E" rx="2.8"/></svg>
<svg class="r" style="left:1014px;top:55px" width="8" height="6" viewBox="0 0 8 6"><path d="M3.9 0.7L6.9 5H0.9Z" fill="#666"/></svg>
<svg class="r" style="left:1014px;top:566px" width="8" height="6" viewBox="0 0 8 6"><path d="M4 4.8L7 0.5H1Z" fill="#666"/></svg>
<div class="r" style="left:0px;top:573px;width:1024px;height:21.4px;background:#E7EAEE;"></div>
<svg class="r" style="left:16.6px;top:579.8px" width="4.5" height="7" viewBox="0 0 4.5 7"><path d="M3.6 0.6L0.8 3.5L3.6 6.4" fill="none" stroke="#9a9a9a" stroke-width="1"/></svg>
<svg class="r" style="left:38.3px;top:579.8px" width="4.5" height="7" viewBox="0 0 4.5 7"><path d="M0.9 0.6L3.7 3.5L0.9 6.4" fill="none" stroke="#444" stroke-width="1"/></svg>
<div class="t" style="left:80.70px;top:579px;font-size:9.7px;line-height:11px;height:11px;color:#333;letter-spacing:-0.195px;">How To</div>
<svg class="r" style="left:119px;top:577px" width="2" height="13"><rect x="0.55" y="0.30" width="0.90" height="12.40" fill="#D2D2D8"/></svg>
<div class="r" style="left:124.4px;top:575.7px;width:73.2px;height:15.4px;background:#FFFF8E;border-radius:3px;"></div>
<div class="t" style="left:130.80px;top:579px;font-size:9.7px;line-height:11px;height:11px;color:#222;letter-spacing:-0.264px;">2025 Accounts</div>
<svg class="r" style="left:200px;top:577px" width="2" height="13"><rect x="0.55" y="0.30" width="0.90" height="12.40" fill="#D2D2D8"/></svg>
<div class="t" style="left:210.00px;top:579px;font-size:9.7px;line-height:11px;height:11px;color:#333;letter-spacing:-0.384px;">2025 MRR Dashboard</div>
<svg class="r" style="left:309px;top:577px" width="2" height="13"><rect x="0.55" y="0.30" width="0.90" height="12.40" fill="#D2D2D8"/></svg>
<div class="t" style="left:318.30px;top:579px;font-size:9.7px;line-height:11px;height:11px;color:#333;letter-spacing:-0.548px;">IS 2025</div>
<svg class="r" style="left:355px;top:572px" width="55" height="21" viewBox="355 572 55 21"><path d="M356.6 572.8Q360.2 572.8 360.2 576.4V588.2Q360.2 591.3 363.3 591.3H401Q404.1 591.3 404.1 588.2V576.4Q404.1 572.8 407.7 572.8Z" fill="#fff"/></svg>
<div class="t" style="left:365.00px;top:577px;font-size:9.7px;line-height:11px;height:11px;color:#1a1a1a;letter-spacing:-0.515px;-webkit-text-stroke:0.4px #1a1a1a;">CF 2025</div>
<svg class="r" style="left:365px;top:588px" width="34" height="2"><rect x="0.00" y="0.35" width="33.80" height="1.40" fill="#15703C"/></svg>
<svg class="r" style="left:355px;top:577px" width="2" height="13"><rect x="0.75" y="0.30" width="0.90" height="12.40" fill="#DCDCE1"/></svg>
<svg class="r" style="left:406px;top:577px" width="2" height="13"><rect x="0.25" y="0.30" width="0.90" height="12.40" fill="#DCDCE1"/></svg>
<div class="t" style="left:415.60px;top:579px;font-size:9.7px;line-height:11px;height:11px;color:#333;letter-spacing:-0.616px;">BS 2025</div>
<svg class="r" style="left:457px;top:577px" width="2" height="13"><rect x="0.15" y="0.30" width="0.90" height="12.40" fill="#D2D2D8"/></svg>
<div class="t" style="left:467.50px;top:579px;font-size:9.7px;line-height:11px;height:11px;color:#333;letter-spacing:-0.323px;">Statements Summary 2025</div>
<svg class="r" style="left:587px;top:577px" width="2" height="13"><rect x="0.25" y="0.30" width="0.90" height="12.40" fill="#DCDCE1"/></svg>
<div class="r" style="left:590.5px;top:575.7px;width:62.3px;height:15.4px;background:#FFFF8E;border-radius:3px;"></div>
<div class="t" style="left:597.00px;top:579px;font-size:9.7px;line-height:11px;height:11px;color:#222;letter-spacing:-0.796px;">CAPEX 2025</div>
<svg class="r" style="left:654px;top:577px" width="2" height="13"><rect x="0.95" y="0.30" width="0.90" height="12.40" fill="#D2D2D8"/></svg>
<div class="r" style="left:658.5px;top:575.7px;width:73.2px;height:15.4px;background:#FFFF8E;border-radius:3px;"></div>
<div class="t" style="left:665.00px;top:579px;font-size:9.7px;line-height:11px;height:11px;color:#222;letter-spacing:-0.264px;">2026 Accounts</div>
<svg class="r" style="left:734px;top:577px" width="2" height="13"><rect x="0.55" y="0.30" width="0.90" height="12.40" fill="#D2D2D8"/></svg>
<div class="t" style="left:743.80px;top:579px;font-size:9.7px;line-height:11px;height:11px;color:#333;letter-spacing:-0.384px;">2026 MRR Dashboard</div>
<svg class="r" style="left:842px;top:577px" width="2" height="13"><rect x="0.75" y="0.30" width="0.90" height="12.40" fill="#D2D2D8"/></svg>
<div class="t" style="left:852.00px;top:579px;font-size:9.7px;line-height:11px;height:11px;color:#333;letter-spacing:-0.434px;">IS 2026</div>
<svg class="r" style="left:890px;top:577px" width="2" height="13"><rect x="0.25" y="0.30" width="0.90" height="12.40" fill="#D2D2D8"/></svg>
<div class="t" style="left:899.00px;top:579px;font-size:9.7px;line-height:11px;height:11px;color:#666;letter-spacing:-0.230px;">(</div>
<svg class="r" style="left:907px;top:582px" width="3" height="3"><rect x="0.60" y="0.40" width="1.90" height="1.80" fill="#333"/></svg>
<svg class="r" style="left:910px;top:582px" width="3" height="3"><rect x="0.50" y="0.40" width="1.90" height="1.80" fill="#333"/></svg>
<svg class="r" style="left:913px;top:582px" width="3" height="3"><rect x="0.40" y="0.40" width="1.90" height="1.80" fill="#333"/></svg>
<div class="r" style="left:929.3px;top:583px;width:7.6px;height:0.9px;background:#333;"></div>
<div class="r" style="left:932.65px;top:579.6px;width:0.9px;height:7.6px;background:#333;"></div>
<div class="r" style="left:954px;top:579.5px;width:1.5px;height:1.5px;background:#333;border-radius:50%;"></div>
<div class="r" style="left:954px;top:582.5px;width:1.5px;height:1.5px;background:#333;border-radius:50%;"></div>
<div class="r" style="left:954px;top:585.5px;width:1.5px;height:1.5px;background:#333;border-radius:50%;"></div>
<svg class="r" style="left:965px;top:578px" width="47" height="11"><rect x="0.80" y="0.30" width="45.60" height="10.60" fill="#F7F7F9" rx="5.3"/></svg>
<svg class="r" style="left:976px;top:580px" width="24" height="7"><rect x="0.80" y="0.60" width="22.50" height="5.80" fill="#6E6E6E" rx="2.9"/></svg>
<svg class="r" style="left:969px;top:580.5px" width="5" height="6" viewBox="0 0 5 6"><path d="M0.5 3L4.5 0.3V5.7Z" fill="#555"/></svg>
<svg class="r" style="left:1003.8px;top:580.5px" width="5" height="6" viewBox="0 0 5 6"><path d="M4.5 3L0.5 0.3V5.7Z" fill="#555"/></svg>
<div class="r" style="left:0px;top:594px;width:1024px;height:12px;background:#F3F3F3;"></div>
<div class="r" style="left:0px;top:594px;width:1024px;height:1px;background:#DDDDE0;"></div>
<div class="t" style="left:7.60px;top:597px;font-size:7.2px;line-height:9px;height:9px;color:#555;letter-spacing:-0.343px;">Ready</div>
<svg class="r" style="left:40px;top:597px" width="10" height="9" viewBox="0 0 10 9"><rect x="0.7" y="0.7" width="8.6" height="8.6" fill="none" stroke="#444" stroke-width="0.9"/><rect x="0.3" y="0.3" width="9.4" height="2.3" fill="#4a4a4a"/><circle cx="5.6" cy="5.9" r="2" fill="none" stroke="#444" stroke-width="0.9"/><circle cx="5.6" cy="5.9" r="0.8" fill="#333"/><path d="M1.6 5.9H2.8" stroke="#444" stroke-width="0.8"/></svg>
<svg class="r" style="left:61px;top:596.6px" width="10" height="9.4" viewBox="0 0 10 9.4"><circle cx="4.6" cy="1.9" r="1.25" fill="none" stroke="#333" stroke-width="0.75"/><path d="M0.9 3.4Q4.6 4.4 8.4 3.2" fill="none" stroke="#333" stroke-width="0.85"/><circle cx="1" cy="3.1" r="0.6" fill="#333"/><circle cx="8.3" cy="2.6" r="0.9" fill="none" stroke="#333" stroke-width="0.6"/><path d="M4.6 3.8V6.2M4.6 6L2.9 9.4M4.6 6L5.6 7.4" fill="none" stroke="#333" stroke-width="0.85"/><path d="M6.2 6.9L9.2 9.6M9.2 6.9L6.2 9.6" stroke="#333" stroke-width="0.75"/></svg>
<div class="t" style="left:73.60px;top:597px;font-size:7.2px;line-height:9px;height:9px;color:#222;letter-spacing:-0.217px;font-weight:bold;">Accessibility: Investigate</div>
<div class="r" style="left:826.5px;top:595px;width:26.5px;height:11px;background:#E0E0E0;"></div>
<svg class="r" style="left:834.3px;top:596.8px" width="9.5" height="9" viewBox="0 0 9.5 9"><rect x="0.5" y="0.5" width="8.5" height="8" fill="none" stroke="#333" stroke-width="0.85"/><path d="M0.5 3.2H9M0.5 5.9H9M3.3 0.5V8.5M6.2 0.5V8.5" stroke="#333" stroke-width="0.7"/></svg>
<svg class="r" style="left:861px;top:596.8px" width="9.5" height="9" viewBox="0 0 9.5 9"><rect x="0.5" y="0.5" width="8.5" height="8" fill="none" stroke="#444" stroke-width="0.85"/><rect x="2.6" y="2.4" width="4.3" height="4.3" fill="none" stroke="#444" stroke-width="0.7"/></svg>
<svg class="r" style="left:887.8px;top:596.8px" width="9.5" height="9" viewBox="0 0 9.5 9"><rect x="0.5" y="0.5" width="8.5" height="8" fill="none" stroke="#444" stroke-width="0.85"/><path d="M0.5 5.4H5.2V0.5" fill="none" stroke="#444" stroke-width="0.8"/></svg>
<div class="r" style="left:910px;top:601.2px;width:4.8px;height:0.9px;background:#555;"></div>
<div class="r" style="left:918.3px;top:600.9px;width:66px;height:1.5px;background:#B8B8B8;"></div>
<div class="r" style="left:950.9px;top:597.2px;width:2.8px;height:8.6px;background:#5a5a5a;"></div>
<div class="r" style="left:988px;top:601.2px;width:4.8px;height:0.9px;background:#555;"></div>
<div class="r" style="left:990px;top:599.2px;width:0.9px;height:4.8px;background:#555;"></div>
<div class="t" style="left:1002.70px;top:597px;font-size:7.2px;line-height:9px;height:9px;color:#444;letter-spacing:-0.429px;">100%</div>
</body></html>
